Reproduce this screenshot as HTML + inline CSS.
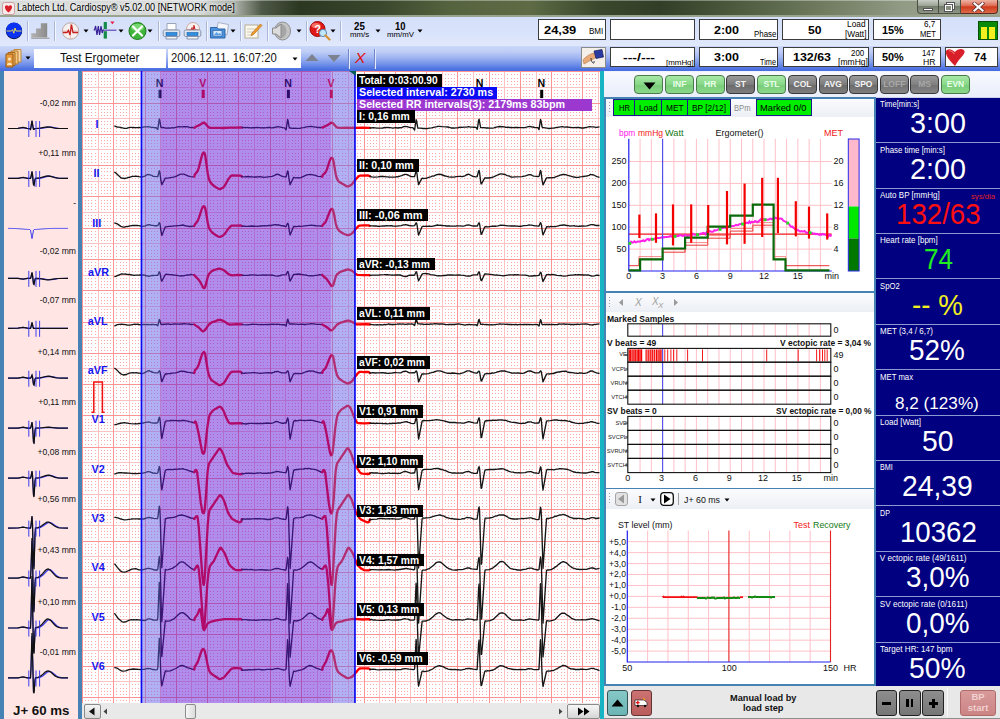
<!DOCTYPE html><html><head><meta charset="utf-8"><title>Cardiospy</title><style>
*{margin:0;padding:0;box-sizing:border-box}
html,body{width:1000px;height:719px;overflow:hidden;background:#fff}
body{font-family:"Liberation Sans",sans-serif;position:relative;font-size:11px;color:#000}
.a{position:absolute}
.t{position:absolute;white-space:nowrap;line-height:1}
.b{font-weight:bold}
.box{position:absolute;background:#fff;border:1px solid #3c3c3c;}
.lbl{position:absolute;white-space:nowrap;color:#fff;font-weight:bold;font-size:11px;line-height:12.5px;height:12.5px;padding-left:1px;letter-spacing:-0.2px}
.gb{position:absolute;top:75px;height:19px;width:29px;border-radius:4px;border:1px solid #3a3a3a;font-weight:bold;font-size:8.5px;text-align:center;line-height:17px;color:#f4f4f4}
.gbg{background:linear-gradient(#a8e8a8,#86d886 50%,#78cc78 51%,#8ad88a);color:#e8ffe8;border-color:#4a7a4a}
.gbk{background:linear-gradient(#9a9a9a,#7c7c7c 50%,#6a6a6a 51%,#7e7e7e);}
.gbd{background:linear-gradient(#9a9a9a,#808080 50%,#727272 51%,#848484);color:#a8a8a8}
.sb{position:absolute;top:99px;height:17px;background:#00ee00;border:1px solid #1a1a8a;font-size:10.5px;text-align:center;line-height:15px;color:#000}
.dp{position:absolute;left:876px;width:124px;background:#000080;color:#fff;border-top:1px solid #7a8fc8}
.dp .l{position:absolute;left:3px;top:3px;font-size:8.5px;white-space:nowrap;letter-spacing:-0.1px}
.dp .v{position:absolute;left:0;width:124px;text-align:center;top:12px;font-size:29px;line-height:32px;white-space:nowrap}
.ax{position:absolute;font-size:9.5px;white-space:nowrap;line-height:1;color:#111}
</style></head><body>
<div class="a" style="left:0;top:0;width:1000px;height:17px;background:linear-gradient(90deg,#d9dcdb 0,#d4d7d6 200px,#a0a69c 238px,#4e5846 262px,#2c3722 300px,#3a472c 380px,#56633f 450px,#5e6b45 530px,#3a472c 600px,#323e27 660px,#4f5c3f 740px,#6f7a5e 820px,#929b86 905px,#a0a894 1000px)"></div>
<div class="a" style="left:0;top:0;width:1000px;height:1px;background:rgba(255,255,255,.35)"></div>
<div class="a" style="left:0;top:15px;width:1000px;height:1.5px;background:#9aa38e"></div>
<svg class="a" style="left:2px;top:2px" width="13" height="13" viewBox="0 0 13 13"><rect x="0.5" y="0.5" width="12" height="12" rx="2" fill="#fbeaea" stroke="#c9a0a0"/><path d="M6.5 10.5 C2 7 2.2 3.2 4.6 3.2 C5.8 3.2 6.5 4.4 6.5 4.4 C6.5 4.4 7.2 3.2 8.4 3.2 C10.8 3.2 11 7 6.5 10.5Z" fill="#d8202a"/></svg>

<div class="t" style="left:17.30px;top:3.44px;font-size:10px;color:#000;transform-origin:0 0;transform:scaleX(0.9125);text-shadow:0 0 4px #fff,0 0 6px #fff;">Labtech Ltd. Cardiospy® v5.02.00 [NETWORK mode]</div>
<div class="a" style="left:917px;top:0;width:22px;height:14px;border:1px solid #4a5040;border-top:none;border-radius:0 0 0 4px;background:linear-gradient(#c9cdc6,#9aa294 45%,#747c6c 50%,#8d9586)"></div>
<div class="a" style="left:939px;top:0;width:22px;height:14px;border:1px solid #4a5040;border-top:none;border-left:none;background:linear-gradient(#c9cdc6,#9aa294 45%,#747c6c 50%,#8d9586)"></div>
<div class="a" style="left:961px;top:0;width:37px;height:14px;border:1px solid #5a2a24;border-top:none;border-left:none;border-radius:0 0 4px 0;background:linear-gradient(#eeb4a4,#de6a52 45%,#d03a1c 52%,#dc6a48)"></div>
<div class="a" style="left:923px;top:8px;width:10px;height:3px;background:#fff;border:1px solid #555"></div>
<div class="a" style="left:947px;top:3px;width:7px;height:6px;border:1.5px solid #fff;outline:1px solid #555"></div>
<div class="a" style="left:945px;top:5px;width:7px;height:6px;border:1.5px solid #fff;background:#888f80;outline:1px solid #555"></div>
<svg class="a" style="left:972px;top:2px" width="13" height="10" viewBox="0 0 13 10"><path d="M2.5 1.5L10.5 8.5M10.5 1.5L2.5 8.5" stroke="#5a3030" stroke-width="3.6" stroke-linecap="square"/><path d="M2.5 1.5L10.5 8.5M10.5 1.5L2.5 8.5" stroke="#fff" stroke-width="2.2" stroke-linecap="square"/></svg>

<div class="a" style="left:0;top:16.5px;width:1000px;height:28.5px;background:linear-gradient(#d4dff9,#d9e3fb 60%,#e0e8fc)"></div>
<div class="a" style="left:0;top:44.5px;width:1000px;height:26.8px;background:linear-gradient(#eef2fd 0,#c8d5f8 6%,#c0cef7 25%,#9db3f1 50%,#6f8fe9 75%,#4a70e1 94%,#466ce0 100%)"></div>

<div class="a" style="left:27.0px;top:21px;width:1px;height:20px;background:#a9b6d6"></div><div class="a" style="left:28.0px;top:21px;width:1px;height:20px;background:#f4f7ff"></div>
<div class="a" style="left:54.0px;top:21px;width:1px;height:20px;background:#a9b6d6"></div><div class="a" style="left:55.0px;top:21px;width:1px;height:20px;background:#f4f7ff"></div>
<div class="a" style="left:157.5px;top:21px;width:1px;height:20px;background:#a9b6d6"></div><div class="a" style="left:158.5px;top:21px;width:1px;height:20px;background:#f4f7ff"></div>
<div class="a" style="left:205.5px;top:21px;width:1px;height:20px;background:#a9b6d6"></div><div class="a" style="left:206.5px;top:21px;width:1px;height:20px;background:#f4f7ff"></div>
<div class="a" style="left:240.0px;top:21px;width:1px;height:20px;background:#a9b6d6"></div><div class="a" style="left:241.0px;top:21px;width:1px;height:20px;background:#f4f7ff"></div>
<div class="a" style="left:266.5px;top:21px;width:1px;height:20px;background:#a9b6d6"></div><div class="a" style="left:267.5px;top:21px;width:1px;height:20px;background:#f4f7ff"></div>
<div class="a" style="left:305.5px;top:21px;width:1px;height:20px;background:#a9b6d6"></div><div class="a" style="left:306.5px;top:21px;width:1px;height:20px;background:#f4f7ff"></div>
<div class="a" style="left:339.5px;top:21px;width:1px;height:20px;background:#a9b6d6"></div><div class="a" style="left:340.5px;top:21px;width:1px;height:20px;background:#f4f7ff"></div>
<svg class="a" style="left:83px;top:29px" width="6" height="4"><path d="M0.5 0.5H5.5L3 3.5Z" fill="#000"/></svg>
<svg class="a" style="left:118px;top:29px" width="6" height="4"><path d="M0.5 0.5H5.5L3 3.5Z" fill="#000"/></svg>
<svg class="a" style="left:147px;top:29px" width="6" height="4"><path d="M0.5 0.5H5.5L3 3.5Z" fill="#000"/></svg>
<svg class="a" style="left:229.5px;top:29px" width="6" height="4"><path d="M0.5 0.5H5.5L3 3.5Z" fill="#000"/></svg>
<svg class="a" style="left:296px;top:29px" width="6" height="4"><path d="M0.5 0.5H5.5L3 3.5Z" fill="#000"/></svg>
<svg class="a" style="left:329.5px;top:29px" width="6" height="4"><path d="M0.5 0.5H5.5L3 3.5Z" fill="#000"/></svg>
<svg class="a" style="left:375px;top:29px" width="6" height="4"><path d="M0.5 0.5H5.5L3 3.5Z" fill="#000"/></svg>
<svg class="a" style="left:417px;top:29px" width="6" height="4"><path d="M0.5 0.5H5.5L3 3.5Z" fill="#000"/></svg>
<svg class="a" style="left:5px;top:22px" width="18" height="18" viewBox="0 0 18 18"><circle cx="9" cy="9" r="8.2" fill="#0a0a30"/><circle cx="9" cy="8.4" r="8" fill="#0a32f0"/><path d="M1.5 9H6.5L7.6 7.6L8.8 11.2L10 6L11 9H16.5" fill="none" stroke="#ffe84a" stroke-width="0.9"/></svg>
<svg class="a" style="left:30px;top:22px" width="23" height="18" viewBox="0 0 23 18"><defs><linearGradient id="stg" x1="0" x2="1"><stop offset="0" stop-color="#b4b4b4"/><stop offset="1" stop-color="#8a8a8a"/></linearGradient></defs><path d="M1.2 15.6V11.3H6V6.5H10.8V1.2H17.2V15.6Z" fill="url(#stg)"/><path d="M1.2 15.6H19.5V17H1.2Z" fill="#a8a8a8"/></svg>
<svg class="a" style="left:61px;top:22px" width="19" height="18" viewBox="0 0 19 18"><circle cx="9.5" cy="9" r="8.2" fill="#f6f0ee" stroke="#b9a9a6" stroke-width="1"/><path d="M9.5 1V17M1.5 9H17.5" stroke="#e2b4b0" stroke-width="0.8"/><path d="M2 10.5H6L7.5 8.5L9 13L10.5 2.5L12 10.5H17" fill="none" stroke="#c81e1e" stroke-width="1.3"/></svg>
<svg class="a" style="left:93px;top:21px" width="25" height="19" viewBox="0 0 25 19"><path d="M0.6 9H1.6L2.6 5L4 14L5.3 5L6.6 14L8 5L9.2 12L10.4 8.5" fill="none" stroke="#3a2096" stroke-width="1.2"/><rect x="10.7" y="1" width="3.2" height="7" fill="#158a4a"/><rect x="10.7" y="10.2" width="3.2" height="7.4" fill="#158a4a"/><path d="M10 9.2H23.5" stroke="#5a3ab0" stroke-width="1.1"/><path d="M17.2 0.6H21.6L19.4 3.2Z" fill="#e81e4a"/></svg>
<svg class="a" style="left:128px;top:22px" width="19" height="18" viewBox="0 0 19 18"><circle cx="9.5" cy="9" r="8.5" fill="#3fb43a" stroke="#1c7a1c"/><ellipse cx="9.5" cy="5.5" rx="6.5" ry="3.8" fill="#8fe486" opacity=".7"/><path d="M5 4.5L14 13.5M14 4.5L5 13.5" stroke="#fff" stroke-width="2.2" stroke-linecap="round"/></svg>
<svg class="a" style="left:162px;top:22px" width="19" height="18" viewBox="0 0 19 18"><path d="M5 1.5H14V8H5Z" fill="#fdfdfd" stroke="#9aa6b8"/><rect x="1.2" y="8" width="16.6" height="6.5" rx="1.5" fill="#dfe6ee" stroke="#8795ab"/><rect x="4" y="10.5" width="11" height="3" fill="#2f8fe0" stroke="#1b5fb0" stroke-width=".6"/><path d="M4 14.5H15V17H4Z" fill="#f4f6fa" stroke="#8795ab"/></svg>
<svg class="a" style="left:183px;top:22px" width="19" height="18" viewBox="0 0 19 18"><circle cx="10" cy="7" r="6.5" fill="#f6f0ee" stroke="#c9a9a6"/><path d="M4.5 8H8L9 6L10 10L11 3L12 8H15.5" fill="none" stroke="#c81e1e" stroke-width="1.1"/><rect x="1.2" y="8" width="16.6" height="6.5" rx="1.5" fill="#dfe6ee" stroke="#8795ab"/><rect x="4" y="10.5" width="11" height="3" fill="#2f8fe0" stroke="#1b5fb0" stroke-width=".6"/><path d="M4 14.5H15V17H4Z" fill="#f4f6fa" stroke="#8795ab"/></svg>
<svg class="a" style="left:209px;top:21px" width="21" height="19" viewBox="0 0 21 19"><path d="M9 1.5L19.5 3.5L18 14L7.5 12Z" fill="#f4f6fb" stroke="#a8b2c6"/><path d="M1.5 6.5H8L9.5 8H16V17H1.5Z" fill="#4d92dc" stroke="#2b64aa"/><rect x="4" y="9.5" width="9" height="5.5" fill="#d6e8fb" stroke="#2b64aa" stroke-width=".7"/><path d="M5 14L7.5 11L9.5 13L11 12L12.5 14Z" fill="#5aa0e8"/></svg>
<svg class="a" style="left:243px;top:22px" width="20" height="18" viewBox="0 0 20 18"><rect x="2" y="3" width="13" height="13" fill="#fbf8ee" stroke="#b8ae96"/><path d="M4 7H13M4 10H13M4 13H10" stroke="#c9c2ae" stroke-width=".9"/><path d="M17.5 2L9 11L8 13.5L10.5 12.5L19 3.5Z" fill="#f0a030" stroke="#b86a10" stroke-width=".7"/></svg>
<svg class="a" style="left:271px;top:21px" width="21" height="20" viewBox="0 0 21 20"><ellipse cx="11.5" cy="10" rx="8" ry="9" fill="#c4c4c4" stroke="#8e8e8e"/><ellipse cx="10" cy="10" rx="5.5" ry="7" fill="#a6a6a6"/><path d="M1.5 7H5L10 3V17L5 13H1.5Z" fill="#dcdcdc" stroke="#8a8a8a"/></svg>
<svg class="a" style="left:309px;top:21px" width="22" height="20" viewBox="0 0 22 20"><circle cx="8.5" cy="8" r="7.5" fill="#e01818" stroke="#a00808"/><ellipse cx="7" cy="4.6" rx="4.5" ry="2.6" fill="#ff8a7a" opacity=".75"/><text x="8.5" y="12" font-family="Liberation Sans" font-weight="bold" font-size="11" fill="#fff" text-anchor="middle">?</text><circle cx="14" cy="12" r="3.6" fill="#bfe6fa" stroke="#5a8ab0" stroke-width="1"/><path d="M16.5 14.5L20.5 18.5" stroke="#d89030" stroke-width="2.2" stroke-linecap="round"/></svg>
<div class="t" style="left:353.70px;top:21.73px;font-size:10px;color:#000;font-weight:bold;transform-origin:0 0;transform:scaleX(0.9711);">25</div>
<div class="t" style="left:349.50px;top:31.43px;font-size:8px;color:#000;transform-origin:0 0;transform:scaleX(0.9821);">mm/s</div>
<div class="t" style="left:395.00px;top:21.73px;font-size:10px;color:#000;font-weight:bold;transform-origin:0 0;transform:scaleX(0.9441);">10</div>
<div class="t" style="left:386.70px;top:31.43px;font-size:8px;color:#000;transform-origin:0 0;transform:scaleX(0.9800);">mm/mV</div>
<div class="box" style="left:538px;top:19.3px;width:68px;height:20.499999999999996px"></div>
<div class="box" style="left:610px;top:19.3px;width:85px;height:20.499999999999996px"></div>
<div class="box" style="left:699px;top:19.3px;width:78.5px;height:20.499999999999996px"></div>
<div class="box" style="left:782px;top:19.3px;width:87px;height:20.499999999999996px"></div>
<div class="box" style="left:872.5px;top:19.3px;width:68.0px;height:20.499999999999996px"></div>
<div class="box" style="left:610px;top:47px;width:85px;height:20px"></div>
<div class="box" style="left:699px;top:47px;width:78.5px;height:20px"></div>
<div class="box" style="left:782.5px;top:47px;width:86.0px;height:20px"></div>
<div class="box" style="left:872.5px;top:47px;width:68.0px;height:20px"></div>
<div class="box" style="left:944.5px;top:47px;width:53.0px;height:20px"></div>
<div class="t" style="left:543.70px;top:25.19px;font-size:11px;color:#000;font-weight:bold;transform-origin:0 0;transform:scaleX(1.1735);">24,39</div>
<div class="t" style="left:588.70px;top:26.16px;font-size:9.5px;color:#000;transform-origin:0 0;transform:scaleX(0.8467);">BMI</div>
<div class="t" style="left:713.70px;top:25.19px;font-size:11px;color:#000;font-weight:bold;transform-origin:0 0;transform:scaleX(1.1357);">2:00</div>
<div class="t" style="left:753.50px;top:30.00px;font-size:8.5px;color:#000;transform-origin:0 0;transform:scaleX(0.9336);">Phase</div>
<div class="t" style="left:807.50px;top:25.19px;font-size:11px;color:#000;font-weight:bold;transform-origin:0 0;transform:scaleX(1.1035);">50</div>
<div class="t" style="left:847.00px;top:20.30px;font-size:8.5px;color:#000;transform-origin:0 0;transform:scaleX(0.9785);">Load</div>
<div class="t" style="left:844.50px;top:29.60px;font-size:8.5px;color:#000;transform-origin:0 0;transform:scaleX(0.9826);">[Watt]</div>
<div class="t" style="left:882.00px;top:25.19px;font-size:11px;color:#000;font-weight:bold;transform-origin:0 0;transform:scaleX(0.9857);">15%</div>
<div class="t" style="left:923.70px;top:20.30px;font-size:8.5px;color:#000;transform-origin:0 0;transform:scaleX(0.9564);">6,7</div>
<div class="t" style="left:919.50px;top:29.60px;font-size:8.5px;color:#000;transform-origin:0 0;transform:scaleX(0.8918);">MET</div>
<div class="t" style="left:622.50px;top:52.39px;font-size:11px;color:#000;font-weight:bold;transform-origin:0 0;transform:scaleX(1.2784);">---/---</div>
<div class="t" style="left:666.00px;top:58.65px;font-size:7.5px;color:#000;transform-origin:0 0;transform:scaleX(1.0553);">[mmHg]</div>
<div class="t" style="left:713.70px;top:52.39px;font-size:11px;color:#000;font-weight:bold;transform-origin:0 0;transform:scaleX(1.1357);">3:00</div>
<div class="t" style="left:760.00px;top:57.80px;font-size:8.5px;color:#000;transform-origin:0 0;transform:scaleX(0.8615);">Time</div>
<div class="t" style="left:793.00px;top:52.39px;font-size:11px;color:#000;font-weight:bold;transform-origin:0 0;transform:scaleX(1.1296);">132/63</div>
<div class="t" style="left:850.50px;top:47.66px;font-size:9.5px;color:#000;transform-origin:0 0;transform:scaleX(0.8329);">200</div>
<div class="t" style="left:837.50px;top:57.80px;font-size:8.5px;color:#000;transform-origin:0 0;transform:scaleX(1.0084);">[mmHg]</div>
<div class="t" style="left:882.00px;top:52.39px;font-size:11px;color:#000;font-weight:bold;transform-origin:0 0;transform:scaleX(0.9857);">50%</div>
<div class="t" style="left:922.00px;top:47.66px;font-size:9.5px;color:#000;transform-origin:0 0;transform:scaleX(0.8203);">147</div>
<div class="t" style="left:922.50px;top:57.80px;font-size:8.5px;color:#000;transform-origin:0 0;transform:scaleX(1.0181);">HR</div>
<div class="t" style="left:973.70px;top:52.39px;font-size:11px;color:#000;font-weight:bold;transform-origin:0 0;transform:scaleX(1.0054);">74</div>
<svg class="a" style="left:945px;top:48px" width="21" height="19" viewBox="0 0 21 19"><path d="M10 18C3 11 0.5 7 1 3.5C1.6 0.5 6 0 9.8 4C13 0.2 18.5 0.2 19.5 3C20.4 6.5 15 9 10 18Z" fill="#d81e28"/><path d="M4 3C6 2 8 4 9.5 6" stroke="#f0786e" stroke-width="1.2" fill="none"/></svg>
<div class="a" style="left:978px;top:21px;width:20px;height:19px;background:#0a8a0a;border:1px solid #055005"></div><div class="a" style="left:981px;top:27px;width:6px;height:12px;background:#f2ee20"></div><div class="a" style="left:989px;top:27px;width:6px;height:12px;background:#f2ee20"></div>
<div class="a" style="left:581px;top:47px;width:25px;height:20.5px;background:#f4efe8;border:1px solid #8a8a8a"></div>
<svg class="a" style="left:582px;top:48px" width="23" height="19" viewBox="0 0 23 19"><path d="M1 12C4 8 8 6 12 5L15 9C11 11 6 14 2 16Z" fill="#e8a878" stroke="#b87848" stroke-width=".6"/><path d="M12 3L20 1.5L21.5 9L14 10.5Z" fill="#2a3aa0" stroke="#141c60" stroke-width=".7"/><path d="M9 10C9 15 13 17 12 13" fill="none" stroke="#333" stroke-width="1"/></svg>
<svg class="a" style="left:5px;top:48px" width="18" height="20" viewBox="0 0 18 20"><path d="M9 1.5H16V14H9Z" fill="#f6d9a8" stroke="#c08a3a"/><path d="M6 3H13V16H6Z" fill="#f2c47c" stroke="#b87a2a"/><path d="M3 4.5H10V17.5H3Z" fill="#eeb060" stroke="#a86a1a"/><path d="M1 6H8V19H1Z" fill="#e89a3c" stroke="#9a5a10"/><circle cx="4.5" cy="11" r="1.6" fill="#fbe4c0"/><path d="M2 17C2 14 7 14 7 17Z" fill="#fbe4c0"/></svg>
<svg class="a" style="left:25px;top:56px" width="6" height="4"><path d="M0.5 0.5H5.5L3 3.5Z" fill="#000"/></svg>
<div class="a" style="left:34px;top:48.5px;width:132px;height:19px;background:#fff"></div>
<div class="t" style="left:60.00px;top:52.02px;font-size:12.5px;color:#111;transform-origin:0 0;transform:scaleX(0.9381);">Test Ergometer</div>
<div class="a" style="left:168px;top:48.5px;width:132.5px;height:19px;background:#fff"></div>
<div class="t" style="left:171.30px;top:52.02px;font-size:12.5px;color:#111;transform-origin:0 0;transform:scaleX(0.9017);">2006.12.11. 16:07:20</div>
<svg class="a" style="left:292px;top:57px" width="6" height="4"><path d="M0.5 0.5H5.5L3 3.5Z" fill="#000"/></svg>
<svg class="a" style="left:305px;top:53px" width="14" height="9"><path d="M0.5 8L7 1L13.5 8Z" fill="#7c8290"/></svg>
<svg class="a" style="left:327px;top:54px" width="14" height="9"><path d="M0.5 1L7 8L13.5 1Z" fill="#7c8290"/></svg>
<div class="a" style="left:348.2px;top:49px;width:1px;height:20px;background:#6f86c8"></div><div class="a" style="left:349.2px;top:49px;width:1px;height:20px;background:#e4ebff"></div>
<div class="a" style="left:374.0px;top:49px;width:1px;height:20px;background:#6f86c8"></div><div class="a" style="left:375.0px;top:49px;width:1px;height:20px;background:#e4ebff"></div>
<div class="t" style="left:355.00px;top:51.35px;font-size:14px;color:#e01010;font-style:italic;transform-origin:0 0;transform:scaleX(1.1244);">X</div>
<div class="a" style="left:0;top:71px;width:83px;height:648px;background:#4682b4"></div>
<div class="a" style="left:4px;top:71px;width:74.3px;height:648px;background:#ffe6e5"></div>
<div class="t" style="left:39.68px;top:98.82px;font-size:8.6px;color:#111;">-0,02 mm</div>
<div class="t" style="left:38.16px;top:148.82px;font-size:8.6px;color:#111;">+0,11 mm</div>
<div class="t" style="left:73.14px;top:198.82px;font-size:8.6px;color:#111;">-</div>
<div class="t" style="left:39.68px;top:246.82px;font-size:8.6px;color:#111;">-0,02 mm</div>
<div class="t" style="left:39.68px;top:295.82px;font-size:8.6px;color:#111;">-0,07 mm</div>
<div class="t" style="left:37.52px;top:347.82px;font-size:8.6px;color:#111;">+0,14 mm</div>
<div class="t" style="left:38.16px;top:397.82px;font-size:8.6px;color:#111;">+0,11 mm</div>
<div class="t" style="left:37.52px;top:447.82px;font-size:8.6px;color:#111;">+0,08 mm</div>
<div class="t" style="left:37.52px;top:494.82px;font-size:8.6px;color:#111;">+0,56 mm</div>
<div class="t" style="left:37.52px;top:545.82px;font-size:8.6px;color:#111;">+0,43 mm</div>
<div class="t" style="left:37.52px;top:597.82px;font-size:8.6px;color:#111;">+0,10 mm</div>
<div class="t" style="left:39.68px;top:647.82px;font-size:8.6px;color:#111;">-0,01 mm</div>
<div class="t" style="left:12.50px;top:704.00px;font-size:13px;color:#111;font-weight:bold;transform-origin:0 0;transform:scaleX(1.0218);">J+ 60 ms</div>
<svg class="a" style="left:0;top:72px" width="82" height="631" viewBox="0 72 82 631"><polyline points="8.0,128.5 18.0,128.4 23.0,127.6 27.0,128.3 29.5,128.6 30.5,129.4 32.0,121.1 33.0,127.2 33.5,129.2 34.0,129.3 35.0,128.6 35.5,128.5 41.0,128.3 49.0,127.1 51.5,127.2 56.5,128.1 59.0,128.3 68.0,128.5" fill="none" stroke="#3a3af0" stroke-width="1.2"/><polyline points="8.0,128.5 18.0,128.4 23.0,127.5 24.0,127.6 27.0,128.3 29.5,128.6 30.5,129.4 31.0,127.1 32.0,120.5 33.0,127.1 33.5,129.3 34.0,129.3 35.0,128.6 35.5,128.5 40.0,128.2 45.5,127.2 47.5,127.0 50.0,127.1 55.0,128.1 57.5,128.3 68.0,128.5" fill="none" stroke="#101010" stroke-width="1.25"/><path d="M28.8 121.0V137.0" stroke="#2a2af0" stroke-width="0.9"/><path d="M36 121.0V137.0" stroke="#2a2af0" stroke-width="0.9"/><path d="M39.6 121.0V137.0" stroke="#2a2af0" stroke-width="0.9"/><polyline points="8.0,178.4 18.0,178.4 23.0,177.5 27.5,178.3 30.5,178.4 31.0,176.9 32.0,171.9 32.5,175.0 33.5,184.3 34.0,184.8 35.0,179.5 35.5,178.4 38.5,178.3 41.0,178.1 47.5,176.3 49.5,176.1 51.5,176.3 56.5,177.8 59.0,178.2 62.0,178.4 68.0,178.4" fill="none" stroke="#3a3af0" stroke-width="1.2"/><polyline points="8.0,178.4 18.0,178.4 23.0,177.4 27.5,178.3 30.5,178.4 31.0,176.8 32.0,171.4 32.5,174.7 33.5,184.7 34.0,185.3 35.0,179.6 35.5,178.4 40.0,177.9 46.0,176.2 48.0,175.9 49.5,176.1 55.0,177.7 58.0,178.2 61.5,178.4 68.0,178.4" fill="none" stroke="#101010" stroke-width="1.25"/><path d="M28.8 170.95V186.95" stroke="#2a2af0" stroke-width="0.9"/><path d="M36 170.95V186.95" stroke="#2a2af0" stroke-width="0.9"/><path d="M39.6 170.95V186.95" stroke="#2a2af0" stroke-width="0.9"/><polyline points="8.0,228.4 8.5,228.4 9.0,228.4 9.5,228.4 10.0,228.4 10.5,228.4 11.0,228.4 11.5,228.4 12.0,228.5 12.5,228.5 13.0,228.5 13.5,228.5 14.0,228.5 14.5,228.5 15.0,228.5 15.5,228.5 16.0,228.6 16.5,228.6 17.0,228.6 17.5,228.6 18.0,228.7 18.5,228.7 19.0,228.7 19.5,228.8 20.0,228.8 20.5,228.8 21.0,228.9 21.5,228.9 22.0,228.9 22.5,229.0 23.0,229.0 23.5,229.1 24.0,229.1 24.5,229.2 25.0,229.2 25.5,229.3 26.0,229.3 26.5,229.3 27.0,229.4 27.5,229.4 28.0,229.5 28.5,229.5 29.0,229.5 29.5,229.5 30.0,229.6 30.5,230.1 31.0,233.0 31.5,235.8 32.0,238.6 32.5,235.8 33.0,233.0 33.5,230.1 34.0,229.6 34.5,229.5 35.0,229.5 35.5,229.5 36.0,229.5 36.5,229.4 37.0,229.4 37.5,229.3 38.0,229.3 38.5,229.3 39.0,229.2 39.5,229.2 40.0,229.1 40.5,229.1 41.0,229.0 41.5,229.0 42.0,228.9 42.5,228.9 43.0,228.9 43.5,228.8 44.0,228.8 44.5,228.8 45.0,228.7 45.5,228.7 46.0,228.7 46.5,228.6 47.0,228.6 47.5,228.6 48.0,228.6 48.5,228.5 49.0,228.5 49.5,228.5 50.0,228.5 50.5,228.5 51.0,228.5 51.5,228.5 52.0,228.5 52.5,228.4 53.0,228.4 53.5,228.4 54.0,228.4 54.5,228.4 55.0,228.4 55.5,228.4 56.0,228.4 56.5,228.4 57.0,228.4 57.5,228.4 58.0,228.4 58.5,228.4 59.0,228.4 59.5,228.4 60.0,228.4 60.5,228.4 61.0,228.4 61.5,228.4 62.0,228.4 62.5,228.4 63.0,228.4 63.5,228.4 64.0,228.4 64.5,228.4 65.0,228.4 65.5,228.4 66.0,228.4 66.5,228.4 67.0,228.4 67.5,228.4 68.0,228.4" fill="none" stroke="#3a3af0" stroke-width="1"/><polyline points="8.0,278.4 18.0,278.4 23.0,279.2 27.5,278.4 30.5,278.4 31.0,277.1 32.0,272.8 32.5,275.4 33.5,283.5 34.0,283.9 35.0,279.3 35.5,278.4 41.0,278.6 47.5,279.6 49.5,279.7 51.5,279.6 56.5,278.8 59.0,278.5 68.0,278.4" fill="none" stroke="#3a3af0" stroke-width="1.2"/><polyline points="8.0,278.4 18.0,278.4 23.0,279.2 27.5,278.4 30.5,278.4 31.0,277.0 32.0,272.4 32.5,275.2 33.5,283.9 34.0,284.4 35.0,279.4 35.5,278.4 40.0,278.7 45.5,279.6 48.0,279.9 50.0,279.7 55.0,278.8 57.5,278.5 68.0,278.4" fill="none" stroke="#101010" stroke-width="1.25"/><path d="M28.8 270.85V286.85" stroke="#2a2af0" stroke-width="0.9"/><path d="M36 270.85V286.85" stroke="#2a2af0" stroke-width="0.9"/><path d="M39.6 270.85V286.85" stroke="#2a2af0" stroke-width="0.9"/><polyline points="8.0,328.3 18.0,328.2 23.0,327.4 27.5,328.2 30.5,328.3 31.0,327.0 32.0,322.7 33.0,327.0 33.5,328.3 68.0,328.3" fill="none" stroke="#3a3af0" stroke-width="1.2"/><polyline points="8.0,328.3 18.0,328.2 23.0,327.3 27.5,328.2 30.5,328.3 31.0,326.9 32.0,322.3 33.0,326.9 33.5,328.3 68.0,328.3" fill="none" stroke="#101010" stroke-width="1.25"/><path d="M28.8 320.8V336.8" stroke="#2a2af0" stroke-width="0.9"/><path d="M36 320.8V336.8" stroke="#2a2af0" stroke-width="0.9"/><path d="M39.6 320.8V336.8" stroke="#2a2af0" stroke-width="0.9"/><polyline points="8.0,378.2 18.0,378.2 23.0,377.3 27.5,378.1 30.5,378.2 31.0,377.6 32.0,375.5 32.5,377.1 33.5,384.1 34.0,384.6 35.0,379.3 35.5,378.2 41.0,377.9 47.5,376.6 49.5,376.4 51.5,376.6 56.5,377.7 59.0,378.0 68.0,378.2" fill="none" stroke="#3a3af0" stroke-width="1.2"/><polyline points="8.0,378.2 18.0,378.2 23.0,377.2 27.5,378.1 30.5,378.2 31.0,377.6 32.0,375.2 32.5,377.0 33.5,384.5 34.0,385.1 35.0,379.4 35.5,378.2 40.0,377.8 45.5,376.5 48.0,376.2 50.0,376.4 55.0,377.7 57.5,378.0 61.0,378.2 68.0,378.2" fill="none" stroke="#101010" stroke-width="1.25"/><path d="M28.8 370.75V386.75" stroke="#2a2af0" stroke-width="0.9"/><path d="M36 370.75V386.75" stroke="#2a2af0" stroke-width="0.9"/><path d="M39.6 370.75V386.75" stroke="#2a2af0" stroke-width="0.9"/><polyline points="8.0,428.2 18.0,428.1 23.0,427.3 27.5,428.1 30.5,428.2 31.0,426.9 32.0,422.6 32.5,426.0 33.5,441.4 34.0,442.5 35.0,430.6 35.5,428.2 41.0,428.0 49.5,427.3 59.0,428.1 68.0,428.2" fill="none" stroke="#3a3af0" stroke-width="1.2"/><polyline points="8.0,428.2 18.0,428.1 23.0,427.2 27.5,428.1 30.5,428.2 31.0,426.8 32.0,422.2 32.5,425.8 33.5,442.3 34.0,443.6 35.0,430.8 35.5,428.2 40.0,428.0 45.5,427.3 48.0,427.2 57.5,428.1 68.0,428.2" fill="none" stroke="#101010" stroke-width="1.25"/><path d="M28.8 420.70000000000005V436.70000000000005" stroke="#2a2af0" stroke-width="0.9"/><path d="M36 420.70000000000005V436.70000000000005" stroke="#2a2af0" stroke-width="0.9"/><path d="M39.6 420.70000000000005V436.70000000000005" stroke="#2a2af0" stroke-width="0.9"/><polyline points="8.0,478.1 18.0,478.1 23.0,477.2 27.5,478.0 30.5,478.1 31.0,476.6 32.0,471.6 32.5,475.6 33.5,494.2 34.0,495.7 35.0,481.1 35.5,478.1 38.5,478.0 41.0,477.7 43.0,477.2 47.5,475.6 49.5,475.4 51.5,475.6 56.5,477.3 59.0,477.8 62.0,478.1 68.0,478.1" fill="none" stroke="#3a3af0" stroke-width="1.2"/><polyline points="8.0,478.1 18.0,478.1 23.0,477.1 27.5,478.0 30.5,478.1 31.0,476.5 32.0,471.1 32.5,475.4 33.5,495.4 34.0,497.0 35.0,481.2 35.5,478.1 38.0,477.9 40.0,477.5 45.5,475.6 48.0,475.2 50.0,475.4 55.0,477.3 57.5,477.8 61.0,478.1 68.0,478.1" fill="none" stroke="#101010" stroke-width="1.25"/><path d="M28.8 470.65000000000003V486.65000000000003" stroke="#2a2af0" stroke-width="0.9"/><path d="M36 470.65000000000003V486.65000000000003" stroke="#2a2af0" stroke-width="0.9"/><path d="M39.6 470.65000000000003V486.65000000000003" stroke="#2a2af0" stroke-width="0.9"/><polyline points="8.0,528.1 18.0,528.0 23.0,527.2 27.5,528.0 30.5,528.1 31.0,525.5 32.0,516.9 32.5,524.4 33.5,563.2 34.0,566.3 35.0,534.4 35.5,528.1 38.5,527.8 41.0,527.2 43.0,526.1 47.5,523.0 48.5,522.7 49.5,522.5 50.5,522.7 51.5,523.0 56.5,526.4 59.0,527.5 62.0,528.0 68.0,528.1" fill="none" stroke="#3a3af0" stroke-width="1.2"/><polyline points="8.0,528.1 18.0,528.0 23.0,527.1 27.5,528.0 30.5,528.1 31.0,525.3 32.0,516.1 32.5,524.1 33.5,565.8 34.0,569.2 35.0,534.9 35.5,528.0 38.0,527.6 40.0,526.9 42.0,525.6 45.5,523.0 47.0,522.2 48.0,522.1 49.0,522.2 50.0,522.7 55.0,526.3 57.5,527.5 59.0,527.8 61.0,528.0 68.0,528.1" fill="none" stroke="#101010" stroke-width="1.25"/><path d="M28.8 520.6V536.6" stroke="#2a2af0" stroke-width="0.9"/><path d="M36 520.6V536.6" stroke="#2a2af0" stroke-width="0.9"/><path d="M39.6 520.6V536.6" stroke="#2a2af0" stroke-width="0.9"/><polyline points="8.0,578.0 18.0,578.0 23.0,577.1 27.5,577.9 30.5,578.0 31.0,569.5 32.0,540.8 32.5,557.8 33.5,607.3 34.0,609.9 35.0,583.3 35.5,578.0 38.5,577.6 40.0,577.1 41.0,576.6 43.0,575.1 46.5,571.3 47.5,570.5 48.5,569.9 49.5,569.7 50.5,569.9 51.5,570.5 56.5,575.6 57.5,576.3 59.0,577.1 60.5,577.6 62.0,577.9 68.0,578.0" fill="none" stroke="#3a3af0" stroke-width="1.2"/><polyline points="8.0,578.0 18.0,578.0 23.0,577.0 27.5,577.9 30.5,578.0 31.0,568.8 32.0,538.0 32.5,556.3 33.5,609.4 34.0,612.3 35.0,583.6 35.5,577.9 38.0,577.3 40.0,576.2 42.0,574.3 45.5,570.3 47.0,569.3 48.0,569.0 49.0,569.3 50.0,569.9 55.0,575.4 56.0,576.2 57.5,577.1 59.0,577.6 61.0,577.9 68.0,578.0" fill="none" stroke="#101010" stroke-width="1.25"/><path d="M28.8 570.55V586.55" stroke="#2a2af0" stroke-width="0.9"/><path d="M36 570.55V586.55" stroke="#2a2af0" stroke-width="0.9"/><path d="M39.6 570.55V586.55" stroke="#2a2af0" stroke-width="0.9"/><polyline points="8.0,628.0 18.0,627.9 23.0,627.1 27.5,627.9 30.5,628.0 31.0,616.8 32.0,579.6 33.5,649.9 34.0,651.9 35.0,631.9 35.5,627.9 38.5,627.6 40.0,627.1 41.0,626.6 43.0,625.1 46.5,621.3 47.5,620.4 48.5,619.8 49.5,619.6 50.5,619.8 51.5,620.4 56.5,625.5 57.5,626.3 59.0,627.1 60.5,627.6 62.0,627.8 68.0,628.0" fill="none" stroke="#3a3af0" stroke-width="1.2"/><polyline points="8.0,628.0 18.0,627.9 23.0,627.0 27.5,627.9 30.5,628.0 31.0,616.0 32.0,576.0 33.5,651.5 34.0,653.6 35.0,632.1 35.5,627.8 38.0,627.2 40.0,626.1 41.5,624.8 45.0,620.8 46.0,619.8 47.0,619.2 48.0,619.0 48.5,619.1 49.5,619.5 51.0,620.8 55.0,625.3 56.5,626.5 58.0,627.2 59.5,627.7 61.5,627.9 68.0,628.0" fill="none" stroke="#101010" stroke-width="1.25"/><path d="M28.8 620.5V636.5" stroke="#2a2af0" stroke-width="0.9"/><path d="M36 620.5V636.5" stroke="#2a2af0" stroke-width="0.9"/><path d="M39.6 620.5V636.5" stroke="#2a2af0" stroke-width="0.9"/><polyline points="8.0,677.9 18.0,677.9 23.0,677.0 27.5,677.8 30.5,677.9 31.0,668.3 32.0,636.1 33.5,691.1 34.0,692.3 35.0,680.3 35.5,677.9 38.5,677.6 41.0,676.9 43.0,675.7 46.5,672.7 48.0,671.8 49.5,671.4 51.0,671.8 52.5,672.7 56.5,676.0 59.0,677.2 62.0,677.8 68.0,677.9" fill="none" stroke="#3a3af0" stroke-width="1.2"/><polyline points="8.0,677.9 18.0,677.9 23.0,676.9 27.5,677.8 30.5,677.9 31.0,667.6 32.0,632.9 33.5,692.1 34.0,693.3 35.0,680.4 35.5,677.8 38.0,677.4 40.0,676.5 42.0,675.1 45.0,672.3 46.5,671.3 48.0,671.0 49.5,671.3 51.0,672.3 55.0,675.9 56.5,676.8 58.0,677.4 59.5,677.7 61.5,677.9 68.0,677.9" fill="none" stroke="#101010" stroke-width="1.25"/><path d="M28.8 670.45V686.45" stroke="#2a2af0" stroke-width="0.9"/><path d="M36 670.45V686.45" stroke="#2a2af0" stroke-width="0.9"/><path d="M39.6 670.45V686.45" stroke="#2a2af0" stroke-width="0.9"/></svg>
<svg class="a" style="left:82px;top:71px" width="518" height="632" viewBox="0 0 518 632">
<defs>
<g id="dr" fill="#ffa6a6" shape-rendering="crispEdges"><rect x="3" y="0" width="1" height="1"/><rect x="6" y="0" width="1" height="1"/><rect x="9" y="0" width="1" height="1"/><rect x="13" y="0" width="1" height="1"/><rect x="19" y="0" width="1" height="1"/><rect x="22" y="0" width="1" height="1"/><rect x="25" y="0" width="1" height="1"/><rect x="28" y="0" width="1" height="1"/><rect x="34" y="0" width="1" height="1"/><rect x="38" y="0" width="1" height="1"/><rect x="41" y="0" width="1" height="1"/><rect x="44" y="0" width="1" height="1"/><rect x="50" y="0" width="1" height="1"/><rect x="53" y="0" width="1" height="1"/><rect x="56" y="0" width="1" height="1"/><rect x="59" y="0" width="1" height="1"/><rect x="66" y="0" width="1" height="1"/><rect x="69" y="0" width="1" height="1"/><rect x="72" y="0" width="1" height="1"/><rect x="75" y="0" width="1" height="1"/><rect x="81" y="0" width="1" height="1"/><rect x="84" y="0" width="1" height="1"/><rect x="88" y="0" width="1" height="1"/><rect x="91" y="0" width="1" height="1"/><rect x="97" y="0" width="1" height="1"/><rect x="100" y="0" width="1" height="1"/><rect x="103" y="0" width="1" height="1"/><rect x="106" y="0" width="1" height="1"/><rect x="113" y="0" width="1" height="1"/><rect x="116" y="0" width="1" height="1"/><rect x="119" y="0" width="1" height="1"/><rect x="122" y="0" width="1" height="1"/><rect x="128" y="0" width="1" height="1"/><rect x="131" y="0" width="1" height="1"/><rect x="135" y="0" width="1" height="1"/><rect x="138" y="0" width="1" height="1"/><rect x="144" y="0" width="1" height="1"/><rect x="147" y="0" width="1" height="1"/><rect x="150" y="0" width="1" height="1"/><rect x="153" y="0" width="1" height="1"/><rect x="160" y="0" width="1" height="1"/><rect x="163" y="0" width="1" height="1"/><rect x="166" y="0" width="1" height="1"/><rect x="169" y="0" width="1" height="1"/><rect x="175" y="0" width="1" height="1"/><rect x="178" y="0" width="1" height="1"/><rect x="181" y="0" width="1" height="1"/><rect x="185" y="0" width="1" height="1"/><rect x="191" y="0" width="1" height="1"/><rect x="194" y="0" width="1" height="1"/><rect x="197" y="0" width="1" height="1"/><rect x="200" y="0" width="1" height="1"/><rect x="206" y="0" width="1" height="1"/><rect x="210" y="0" width="1" height="1"/><rect x="213" y="0" width="1" height="1"/><rect x="216" y="0" width="1" height="1"/><rect x="222" y="0" width="1" height="1"/><rect x="225" y="0" width="1" height="1"/><rect x="228" y="0" width="1" height="1"/><rect x="231" y="0" width="1" height="1"/><rect x="238" y="0" width="1" height="1"/><rect x="241" y="0" width="1" height="1"/><rect x="244" y="0" width="1" height="1"/><rect x="247" y="0" width="1" height="1"/><rect x="253" y="0" width="1" height="1"/><rect x="256" y="0" width="1" height="1"/><rect x="260" y="0" width="1" height="1"/><rect x="263" y="0" width="1" height="1"/><rect x="269" y="0" width="1" height="1"/><rect x="272" y="0" width="1" height="1"/><rect x="275" y="0" width="1" height="1"/><rect x="278" y="0" width="1" height="1"/><rect x="285" y="0" width="1" height="1"/><rect x="288" y="0" width="1" height="1"/><rect x="291" y="0" width="1" height="1"/><rect x="294" y="0" width="1" height="1"/><rect x="300" y="0" width="1" height="1"/><rect x="303" y="0" width="1" height="1"/><rect x="307" y="0" width="1" height="1"/><rect x="310" y="0" width="1" height="1"/><rect x="316" y="0" width="1" height="1"/><rect x="319" y="0" width="1" height="1"/><rect x="322" y="0" width="1" height="1"/><rect x="325" y="0" width="1" height="1"/><rect x="332" y="0" width="1" height="1"/><rect x="335" y="0" width="1" height="1"/><rect x="338" y="0" width="1" height="1"/><rect x="341" y="0" width="1" height="1"/><rect x="347" y="0" width="1" height="1"/><rect x="350" y="0" width="1" height="1"/><rect x="353" y="0" width="1" height="1"/><rect x="357" y="0" width="1" height="1"/><rect x="363" y="0" width="1" height="1"/><rect x="366" y="0" width="1" height="1"/><rect x="369" y="0" width="1" height="1"/><rect x="372" y="0" width="1" height="1"/><rect x="378" y="0" width="1" height="1"/><rect x="382" y="0" width="1" height="1"/><rect x="385" y="0" width="1" height="1"/><rect x="388" y="0" width="1" height="1"/><rect x="394" y="0" width="1" height="1"/><rect x="397" y="0" width="1" height="1"/><rect x="400" y="0" width="1" height="1"/><rect x="404" y="0" width="1" height="1"/><rect x="410" y="0" width="1" height="1"/><rect x="413" y="0" width="1" height="1"/><rect x="416" y="0" width="1" height="1"/><rect x="419" y="0" width="1" height="1"/><rect x="425" y="0" width="1" height="1"/><rect x="429" y="0" width="1" height="1"/><rect x="432" y="0" width="1" height="1"/><rect x="435" y="0" width="1" height="1"/><rect x="441" y="0" width="1" height="1"/><rect x="444" y="0" width="1" height="1"/><rect x="447" y="0" width="1" height="1"/><rect x="450" y="0" width="1" height="1"/><rect x="457" y="0" width="1" height="1"/><rect x="460" y="0" width="1" height="1"/><rect x="463" y="0" width="1" height="1"/><rect x="466" y="0" width="1" height="1"/><rect x="472" y="0" width="1" height="1"/><rect x="475" y="0" width="1" height="1"/><rect x="479" y="0" width="1" height="1"/><rect x="482" y="0" width="1" height="1"/><rect x="488" y="0" width="1" height="1"/><rect x="491" y="0" width="1" height="1"/><rect x="494" y="0" width="1" height="1"/><rect x="497" y="0" width="1" height="1"/><rect x="504" y="0" width="1" height="1"/><rect x="507" y="0" width="1" height="1"/><rect x="510" y="0" width="1" height="1"/><rect x="513" y="0" width="1" height="1"/></g>
</defs>
<rect width="518" height="632" fill="#fff"/>
<use href="#dr" y="3"/><use href="#dr" y="7"/><use href="#dr" y="10"/><use href="#dr" y="13"/><use href="#dr" y="19"/><use href="#dr" y="22"/><use href="#dr" y="25"/><use href="#dr" y="28"/><use href="#dr" y="35"/><use href="#dr" y="38"/><use href="#dr" y="41"/><use href="#dr" y="44"/><use href="#dr" y="50"/><use href="#dr" y="53"/><use href="#dr" y="57"/><use href="#dr" y="60"/><use href="#dr" y="66"/><use href="#dr" y="69"/><use href="#dr" y="72"/><use href="#dr" y="75"/><use href="#dr" y="82"/><use href="#dr" y="85"/><use href="#dr" y="88"/><use href="#dr" y="91"/><use href="#dr" y="97"/><use href="#dr" y="100"/><use href="#dr" y="104"/><use href="#dr" y="107"/><use href="#dr" y="113"/><use href="#dr" y="116"/><use href="#dr" y="119"/><use href="#dr" y="122"/><use href="#dr" y="129"/><use href="#dr" y="132"/><use href="#dr" y="135"/><use href="#dr" y="138"/><use href="#dr" y="144"/><use href="#dr" y="147"/><use href="#dr" y="150"/><use href="#dr" y="154"/><use href="#dr" y="160"/><use href="#dr" y="163"/><use href="#dr" y="166"/><use href="#dr" y="169"/><use href="#dr" y="175"/><use href="#dr" y="179"/><use href="#dr" y="182"/><use href="#dr" y="185"/><use href="#dr" y="191"/><use href="#dr" y="194"/><use href="#dr" y="197"/><use href="#dr" y="200"/><use href="#dr" y="207"/><use href="#dr" y="210"/><use href="#dr" y="213"/><use href="#dr" y="216"/><use href="#dr" y="222"/><use href="#dr" y="226"/><use href="#dr" y="229"/><use href="#dr" y="232"/><use href="#dr" y="238"/><use href="#dr" y="241"/><use href="#dr" y="244"/><use href="#dr" y="247"/><use href="#dr" y="254"/><use href="#dr" y="257"/><use href="#dr" y="260"/><use href="#dr" y="263"/><use href="#dr" y="269"/><use href="#dr" y="272"/><use href="#dr" y="276"/><use href="#dr" y="279"/><use href="#dr" y="285"/><use href="#dr" y="288"/><use href="#dr" y="291"/><use href="#dr" y="294"/><use href="#dr" y="301"/><use href="#dr" y="304"/><use href="#dr" y="307"/><use href="#dr" y="310"/><use href="#dr" y="316"/><use href="#dr" y="319"/><use href="#dr" y="322"/><use href="#dr" y="326"/><use href="#dr" y="332"/><use href="#dr" y="335"/><use href="#dr" y="338"/><use href="#dr" y="341"/><use href="#dr" y="348"/><use href="#dr" y="351"/><use href="#dr" y="354"/><use href="#dr" y="357"/><use href="#dr" y="363"/><use href="#dr" y="366"/><use href="#dr" y="369"/><use href="#dr" y="373"/><use href="#dr" y="379"/><use href="#dr" y="382"/><use href="#dr" y="385"/><use href="#dr" y="388"/><use href="#dr" y="394"/><use href="#dr" y="398"/><use href="#dr" y="401"/><use href="#dr" y="404"/><use href="#dr" y="410"/><use href="#dr" y="413"/><use href="#dr" y="416"/><use href="#dr" y="419"/><use href="#dr" y="426"/><use href="#dr" y="429"/><use href="#dr" y="432"/><use href="#dr" y="435"/><use href="#dr" y="441"/><use href="#dr" y="444"/><use href="#dr" y="448"/><use href="#dr" y="451"/><use href="#dr" y="457"/><use href="#dr" y="460"/><use href="#dr" y="463"/><use href="#dr" y="466"/><use href="#dr" y="473"/><use href="#dr" y="476"/><use href="#dr" y="479"/><use href="#dr" y="482"/><use href="#dr" y="488"/><use href="#dr" y="491"/><use href="#dr" y="495"/><use href="#dr" y="498"/><use href="#dr" y="504"/><use href="#dr" y="507"/><use href="#dr" y="510"/><use href="#dr" y="513"/><use href="#dr" y="520"/><use href="#dr" y="523"/><use href="#dr" y="526"/><use href="#dr" y="529"/><use href="#dr" y="535"/><use href="#dr" y="538"/><use href="#dr" y="541"/><use href="#dr" y="545"/><use href="#dr" y="551"/><use href="#dr" y="554"/><use href="#dr" y="557"/><use href="#dr" y="560"/><use href="#dr" y="566"/><use href="#dr" y="570"/><use href="#dr" y="573"/><use href="#dr" y="576"/><use href="#dr" y="582"/><use href="#dr" y="585"/><use href="#dr" y="588"/><use href="#dr" y="591"/><use href="#dr" y="598"/><use href="#dr" y="601"/><use href="#dr" y="604"/><use href="#dr" y="607"/><use href="#dr" y="613"/><use href="#dr" y="617"/><use href="#dr" y="620"/><use href="#dr" y="623"/><use href="#dr" y="629"/><use href="#dr" y="632"/>
<path d="M16.5 0V632M47.5 0V632M78.5 0V632M109.5 0V632M141.5 0V632M172.5 0V632M203.5 0V632M235.5 0V632M266.5 0V632M297.5 0V632M328.5 0V632M360.5 0V632M391.5 0V632M422.5 0V632M454.5 0V632M485.5 0V632M516.5 0V632M0 16.5H518M0 47.5H518M0 78.5H518M0 110.5H518M0 141.5H518M0 172.5H518M0 204.5H518M0 235.5H518M0 266.5H518M0 297.5H518M0 329.5H518M0 360.5H518M0 391.5H518M0 423.5H518M0 454.5H518M0 485.5H518M0 516.5H518M0 548.5H518M0 579.5H518M0 610.5H518" stroke="#ffc2c2" stroke-width="1" fill="none" shape-rendering="crispEdges"/>
<path d="M0.5 0V632M31.5 0V632M63.5 0V632M94.5 0V632M125.5 0V632M156.5 0V632M188.5 0V632M219.5 0V632M250.5 0V632M282.5 0V632M313.5 0V632M344.5 0V632M375.5 0V632M407.5 0V632M438.5 0V632M469.5 0V632M500.5 0V632M0 0.5H518M0 32.5H518M0 63.5H518M0 94.5H518M0 125.5H518M0 157.5H518M0 188.5H518M0 219.5H518M0 251.5H518M0 282.5H518M0 313.5H518M0 344.5H518M0 376.5H518M0 407.5H518M0 438.5H518M0 470.5H518M0 501.5H518M0 532.5H518M0 563.5H518M0 595.5H518M0 626.5H518" stroke="#ff9292" stroke-width="1" fill="none" shape-rendering="crispEdges"/>
<polyline points="32.3,54.9 35.3,56.2 36.3,56.1 38.8,56.4 39.8,56.9 40.8,56.9 42.3,57.3 44.8,57.3 45.8,56.9 48.8,56.3 49.8,56.4 50.3,56.6 51.3,56.4 53.3,56.6 54.8,56.6 55.8,56.7 56.8,56.5 58.8,56.7 62.3,55.9 65.3,55.8 65.8,55.6 69.8,56.4 70.8,56.3 71.8,56.7 73.3,56.6 73.8,56.8 74.3,56.6 75.3,58.2 75.8,58.4 77.3,47.9 77.8,49.7 78.8,56.0 79.3,56.6 79.8,56.5 80.8,56.7 81.3,56.5 81.8,56.6 83.8,57.1 86.8,56.9 87.8,57.1 90.8,56.6 91.3,56.8 91.8,56.8 96.8,55.7 99.8,55.9 101.3,55.7 104.3,55.7 106.3,55.9 106.8,56.2 108.3,56.6 110.3,56.4 112.3,56.7" fill="none" stroke="#161616" stroke-width="1.35" stroke-linejoin="round"/>
<polyline points="112.3,56.7 114.3,55.5 116.8,54.4 120.8,51.9 121.8,51.6 122.8,52.0 126.3,56.0 126.8,56.4 128.3,56.8 137.3,56.8 140.8,57.0 147.3,56.6 154.3,56.7 159.8,56.5" fill="none" stroke="#ff0000" stroke-width="2.3" stroke-linejoin="round" stroke-linecap="round"/>
<polyline points="159.6,56.5 160.6,56.4 162.1,56.7 163.1,56.5 164.6,56.6 165.1,56.5 169.1,56.9 170.1,56.7 173.1,56.7 175.1,56.4 179.6,56.9 180.6,56.7 181.1,56.8 182.1,56.7 183.1,56.8 186.1,56.4 188.1,56.5 189.1,56.8 190.1,56.8 192.1,56.4 192.6,56.5 193.6,56.1 194.6,56.0 195.6,55.7 197.1,55.8 201.1,56.7 202.6,56.8 204.1,58.8 205.6,48.5 206.1,49.8 207.1,56.2 207.6,57.0 208.1,57.1 208.6,57.0 210.6,57.3 211.6,57.2 213.1,57.4 213.6,57.2 214.6,57.4 218.1,57.3 219.1,56.8 221.6,56.6 224.6,55.8 229.1,55.3 233.1,56.1 234.1,56.2 235.1,56.5 236.6,56.3 238.1,56.5 239.1,56.3 240.6,56.4" fill="none" stroke="#161616" stroke-width="1.35" stroke-linejoin="round"/>
<polyline points="240.3,56.6 245.3,54.2 249.3,51.7 249.8,51.7 250.8,52.1 254.3,56.0 255.3,56.6 255.8,56.6 258.8,56.9 263.8,56.7 269.3,56.9 270.8,56.7 273.3,56.8 279.3,56.6 287.8,56.9" fill="none" stroke="#ff0000" stroke-width="2.3" stroke-linejoin="round" stroke-linecap="round"/>
<polyline points="287.6,56.7 288.1,57.0 291.6,56.7 292.1,56.9 292.6,56.8 296.1,57.2 300.6,57.0 303.1,56.5 303.6,56.6 305.1,56.4 308.1,56.6 311.1,57.1 312.1,56.8 312.6,56.9 313.6,56.7 315.1,57.0 320.1,56.5 320.6,56.1 321.6,55.7 323.1,55.5 324.6,55.7 325.1,55.6 328.1,56.6 330.1,56.7 331.1,56.9 332.6,59.0 334.1,48.6 334.6,49.9 335.6,56.2 336.1,57.2 338.6,57.1 341.1,57.5 342.6,57.4 345.1,57.7 347.1,57.2 349.6,56.9 351.6,56.3 355.1,55.7 355.6,55.4 357.1,55.4 360.1,55.7 364.1,55.8 365.1,56.0 366.1,56.0 367.1,56.4 367.6,56.3 369.1,57.0 371.6,56.9 372.6,57.1 373.6,56.8 376.1,56.8 376.6,56.5 379.1,56.2 380.1,56.4 382.1,56.1 384.6,56.1 386.6,55.6 388.6,56.1 390.6,56.1 391.6,56.3 392.1,56.2 394.1,56.4 395.1,58.3 395.6,56.5 396.6,49.2 397.1,48.2 398.6,56.5 401.1,56.7 401.6,56.6 404.6,57.0 405.6,56.8 407.6,57.1 410.1,57.1 412.1,56.8 412.6,56.5 413.6,56.4 414.1,56.1 415.6,55.8 417.6,55.5 422.6,55.9 423.6,56.3 425.6,56.1 427.6,56.5 429.6,56.4 431.5,56.7 433.0,56.5 435.5,56.4 438.0,56.6 443.0,56.6 443.5,56.3 444.5,56.2 446.5,55.6 448.0,55.5 449.5,55.8 450.0,56.1 451.0,56.0 453.0,56.7 455.5,56.6 456.0,56.9 457.0,58.6 458.5,48.4 459.0,49.7 460.0,55.7 460.5,56.6 461.5,56.6 465.0,57.1 467.0,57.5 470.0,57.1 471.5,57.2 475.0,56.3 475.5,56.4 478.5,55.8 480.5,55.7 482.5,56.1 485.0,56.0 488.0,56.4 489.0,56.4 490.0,56.7 496.5,56.4 499.5,57.0 501.5,57.0 505.5,56.2 506.5,55.8 508.0,55.7 509.0,55.9 511.0,55.8 514.5,56.4 517.5,55.9" fill="none" stroke="#161616" stroke-width="1.35" stroke-linejoin="round"/>
<polyline points="32.3,101.0 33.3,101.6 37.8,105.8 39.3,107.0 42.8,107.5 45.3,106.9 45.8,106.5 47.3,106.4 50.3,105.3 52.3,105.3 53.8,105.1 56.8,105.7 59.8,106.0 62.8,105.1 64.8,103.9 66.3,103.4 69.8,104.4 70.8,105.1 71.8,105.4 75.3,105.7 75.8,105.5 77.3,99.6 77.8,101.1 78.8,109.0 79.8,113.7 83.3,107.1 85.8,107.1 91.3,106.1 93.3,105.6 94.8,105.0 97.8,103.4 99.3,103.1 101.8,103.1 104.3,104.2 104.8,104.3 105.8,104.9 108.3,105.7 110.8,105.8 112.3,105.7" fill="none" stroke="#161616" stroke-width="1.35" stroke-linejoin="round"/>
<polyline points="112.3,105.7 112.8,103.5 114.8,101.2 115.8,99.6 116.8,96.6 119.8,85.1 120.8,82.5 121.3,81.8 121.8,81.5 122.3,81.8 122.8,82.8 123.3,84.8 125.8,102.9 126.8,107.6 127.8,110.2 128.8,111.8 130.3,113.5 133.3,115.9 136.8,117.8 137.8,118.1 138.8,117.8 141.3,116.4 142.8,114.6 146.3,108.3 148.8,105.1 149.8,104.5 158.3,104.6 159.3,105.0 159.8,105.7" fill="none" stroke="#ff0000" stroke-width="2.3" stroke-linejoin="round" stroke-linecap="round"/>
<polyline points="159.6,105.0 160.1,105.7 162.6,105.8 166.1,105.5 167.1,105.8 167.6,105.6 170.1,105.8 172.1,106.2 172.6,106.0 174.6,106.0 175.1,105.8 178.1,105.7 178.6,105.9 179.6,105.8 180.1,106.0 182.1,106.3 190.1,105.4 192.1,104.7 194.1,103.4 195.6,103.2 197.6,104.0 199.6,105.2 201.6,105.7 202.6,105.9 203.1,105.8 203.6,106.0 204.1,105.9 205.6,99.9 206.1,100.9 207.1,108.5 208.1,113.8 211.6,106.4 213.6,106.9 216.1,106.7 218.1,106.9 219.1,106.6 220.1,105.9 220.6,105.9 224.6,103.9 228.6,103.4 233.6,104.4 234.6,104.9 236.1,105.3 239.1,105.7 240.1,105.6 240.6,104.2" fill="none" stroke="#161616" stroke-width="1.35" stroke-linejoin="round"/>
<polyline points="240.3,105.7 240.8,103.9 242.8,102.2 243.8,100.9 244.8,98.6 247.8,89.5 248.8,87.5 249.3,86.9 249.8,86.9 250.3,87.0 250.8,87.7 251.3,89.3 253.8,103.5 254.3,105.7 255.3,108.3 256.3,109.9 257.3,111.0 264.3,115.1 265.3,115.4 266.3,115.4 269.8,113.4 273.8,108.2 276.3,105.6 277.8,104.7 285.8,104.5 286.8,104.7 287.8,105.3" fill="none" stroke="#ff0000" stroke-width="2.3" stroke-linejoin="round" stroke-linecap="round"/>
<polyline points="287.6,105.0 289.6,105.8 292.1,106.1 296.1,105.8 298.6,105.3 299.1,105.5 301.1,105.4 304.1,105.9 305.6,105.9 306.6,106.0 313.1,106.2 315.1,105.7 315.6,105.8 319.6,104.7 322.6,103.3 324.1,103.3 326.1,104.0 327.6,104.9 329.1,105.5 332.1,105.7 332.6,105.5 334.1,99.6 334.6,100.5 335.1,103.4 335.6,108.2 336.6,113.6 338.1,110.6 340.1,107.2 341.6,107.5 342.6,107.3 344.1,107.3 346.6,106.3 348.6,105.8 350.1,105.2 351.6,105.1 354.1,103.8 355.6,103.5 356.1,103.6 357.1,103.2 359.1,103.5 363.1,105.0 364.1,105.1 365.6,105.6 366.1,105.6 366.6,105.9 368.6,106.1 369.1,106.0 370.1,106.2 372.1,106.1 374.1,105.6 377.1,105.3 378.1,105.3 380.1,105.7 383.1,104.8 384.1,104.0 386.1,103.2 387.1,103.3 390.1,105.0 391.1,105.4 393.6,105.9 395.1,105.7 396.6,100.2 397.1,99.4 397.6,101.7 398.6,110.4 399.1,112.9 399.6,112.8 401.6,108.9 402.6,107.3 403.1,106.8 406.6,107.0 409.6,106.5 411.6,105.9 416.6,103.5 418.6,102.9 419.1,102.8 423.1,103.5 425.1,104.6 427.6,105.2 428.6,105.8 429.6,106.0 431.0,106.1 433.0,105.8 440.0,105.7 443.5,104.9 447.0,103.6 448.0,103.6 449.5,104.0 451.0,104.8 452.0,105.1 455.0,105.3 456.0,105.6 457.0,105.4 458.5,99.5 459.0,100.6 460.0,108.6 461.0,113.9 464.5,106.9 468.0,106.7 469.0,106.9 472.0,106.5 473.0,106.2 475.0,105.3 476.5,104.9 478.0,104.1 481.0,103.5 482.0,103.4 483.5,103.7 485.0,104.2 492.0,106.1 492.5,106.0 493.5,106.3 496.5,106.3 498.0,105.8 500.0,105.7 500.5,105.5 501.5,105.5 503.5,105.1 504.5,105.2 507.0,104.3 508.5,103.4 509.0,103.5 511.5,103.8 512.5,104.5 515.0,105.6 517.5,106.3" fill="none" stroke="#161616" stroke-width="1.35" stroke-linejoin="round"/>
<polyline points="32.3,152.0 33.3,152.1 35.3,152.9 38.8,155.4 41.3,156.1 42.8,156.0 43.8,155.7 45.3,155.6 47.8,154.8 50.8,154.5 54.8,154.5 56.8,154.7 59.3,155.2 60.8,155.3 63.3,154.8 65.8,153.8 66.8,153.7 68.3,153.9 69.3,154.4 70.8,154.4 72.3,154.7 75.3,154.7 75.8,154.5 77.3,151.6 77.8,152.3 78.3,154.9 78.8,159.1 79.8,164.4 83.3,155.8 84.3,155.8 86.8,155.3 88.8,155.4 92.3,154.9 94.3,154.9 95.8,154.6 97.3,154.6 100.8,154.0 102.8,154.7 103.8,154.7 104.3,155.0 105.8,155.1 107.3,155.5 112.3,155.1" fill="none" stroke="#161616" stroke-width="1.35" stroke-linejoin="round"/>
<polyline points="112.3,155.1 112.8,153.6 114.8,151.2 115.8,149.5 116.8,147.1 119.8,138.0 120.8,136.0 121.3,135.4 121.8,135.2 122.3,135.4 122.8,136.1 123.3,137.6 124.3,142.8 125.8,152.4 126.8,156.4 127.3,157.4 128.8,160.0 129.8,161.1 131.8,162.8 134.3,164.5 136.3,165.5 137.3,165.9 138.3,165.9 141.3,164.3 142.8,162.8 145.3,159.1 146.8,157.2 148.8,155.2 149.8,154.6 155.3,154.7 158.8,154.5 159.8,155.0" fill="none" stroke="#ff0000" stroke-width="2.3" stroke-linejoin="round" stroke-linecap="round"/>
<polyline points="159.6,154.8 160.6,155.1 161.6,154.9 162.6,155.3 164.1,155.4 166.1,155.4 167.1,155.2 167.6,155.4 169.1,155.0 176.1,155.4 178.1,154.9 179.1,155.0 182.6,154.7 184.6,154.9 186.6,154.5 189.1,154.5 191.6,153.9 193.1,153.7 195.6,154.0 196.6,153.8 198.6,154.5 202.1,155.0 203.6,155.6 204.1,155.5 205.6,152.3 206.1,152.6 206.6,154.6 207.1,158.6 208.1,164.0 211.6,155.5 214.1,155.6 217.6,155.2 218.1,155.3 220.6,155.2 229.6,154.1 230.6,154.4 232.6,154.5 234.1,154.9 237.6,154.9 238.6,155.1 239.6,154.9 240.1,155.0 240.6,154.1" fill="none" stroke="#161616" stroke-width="1.35" stroke-linejoin="round"/>
<polyline points="240.3,155.0 240.8,153.9 243.3,151.4 243.8,150.7 247.8,140.4 248.8,138.6 249.3,138.1 249.8,137.9 250.3,138.0 250.8,138.7 251.3,140.0 252.3,144.5 253.8,152.8 254.8,156.1 255.8,158.1 257.3,159.9 259.8,161.7 261.8,162.7 264.8,164.0 265.8,164.2 267.3,163.9 269.3,163.0 270.8,161.7 273.3,158.4 275.3,156.3 276.8,154.9 277.8,154.6 281.3,154.4 286.3,154.4 287.8,154.9" fill="none" stroke="#ff0000" stroke-width="2.3" stroke-linejoin="round" stroke-linecap="round"/>
<polyline points="287.6,154.7 290.1,154.8 292.1,155.0 294.1,154.9 295.6,155.3 296.1,155.1 297.6,155.4 298.6,155.1 299.1,155.2 301.6,155.0 302.6,155.0 304.6,154.7 307.6,154.9 308.1,154.7 310.1,154.7 310.6,155.0 314.6,155.2 319.1,154.6 321.6,153.8 323.1,153.9 323.6,153.7 327.1,154.5 330.6,154.8 332.6,154.6 334.1,151.8 334.6,152.2 335.1,154.3 336.1,161.6 336.6,164.0 340.1,155.6 340.6,155.3 342.6,155.3 344.1,155.1 345.6,155.3 346.6,155.1 349.6,155.4 351.1,155.2 355.6,154.0 357.1,154.3 358.1,154.2 359.6,154.5 360.6,154.5 361.1,154.7 363.1,154.6 364.1,155.0 365.1,155.0 366.1,154.8 366.6,155.0 367.6,155.0 368.1,155.2 374.1,155.0 374.6,154.8 376.6,154.8 381.1,155.1 382.6,154.8 384.6,154.1 386.6,153.9 390.1,154.9 391.6,155.0 393.1,154.9 394.6,155.1 395.1,155.1 395.6,154.5 396.6,152.2 397.1,151.8 397.6,153.0 399.1,163.3 399.6,163.2 402.1,157.2 403.1,155.6 406.1,155.9 410.6,155.2 414.1,155.2 416.1,154.9 418.6,154.2 422.6,154.4 425.1,154.9 427.1,154.8 429.1,155.0 432.5,154.9 435.0,155.2 435.5,155.1 436.5,155.3 438.5,155.2 439.0,155.3 441.5,154.6 442.5,154.7 445.5,154.3 447.0,153.9 448.0,154.2 449.5,154.1 453.0,154.9 454.5,154.9 456.5,155.2 457.0,155.0 458.5,151.6 459.0,152.3 459.5,154.3 460.5,161.6 461.0,163.9 464.5,155.9 465.0,155.7 467.5,155.9 468.5,155.5 471.0,155.7 473.5,155.6 474.0,155.3 475.5,155.2 478.0,154.4 479.5,154.1 480.0,154.3 481.0,154.0 483.0,154.0 483.5,154.3 485.0,154.5 485.5,154.7 486.5,154.6 488.0,155.1 490.0,154.8 491.0,154.9 492.0,154.7 493.0,155.1 494.5,155.1 496.5,155.4 497.5,155.2 498.0,155.4 499.5,155.0 500.5,155.1 501.5,154.9 502.5,155.1 505.0,154.8 509.0,153.6 511.0,153.7 514.0,154.5 517.5,154.5" fill="none" stroke="#161616" stroke-width="1.35" stroke-linejoin="round"/>
<polyline points="32.3,205.6 33.8,205.4 36.3,204.1 36.8,204.2 37.8,203.6 39.8,202.8 42.3,203.2 43.3,203.0 44.8,203.4 47.3,203.5 52.3,204.3 53.3,204.1 56.8,204.2 57.8,204.0 61.8,204.0 62.8,204.2 63.8,204.8 64.8,204.7 66.3,205.2 67.3,205.2 68.8,204.8 69.3,204.5 70.8,204.4 71.3,204.5 72.8,204.3 75.3,204.4 75.8,204.1 77.3,200.8 77.8,201.7 78.3,203.6 78.8,206.8 79.3,208.9 79.8,210.2 83.3,203.6 84.3,203.2 85.8,203.3 87.8,203.7 88.3,203.6 89.8,203.6 91.3,204.0 93.3,204.1 96.3,204.7 98.8,205.0 100.3,204.7 101.3,204.8 105.3,203.9 105.8,204.0 107.8,203.8 108.8,203.4 109.8,203.7 112.3,203.9" fill="none" stroke="#161616" stroke-width="1.35" stroke-linejoin="round"/>
<polyline points="112.3,203.9 112.8,204.7 115.8,207.7 116.8,208.9 117.8,210.3 121.3,216.8 121.8,217.2 122.3,217.2 122.8,216.7 123.3,215.6 125.8,205.7 126.8,203.2 129.3,200.5 130.3,199.8 131.3,199.3 135.3,198.0 137.8,197.6 140.3,198.5 142.3,199.5 146.8,203.3 148.3,204.0 150.8,204.3 155.8,203.8 159.8,204.1" fill="none" stroke="#ff0000" stroke-width="2.3" stroke-linejoin="round" stroke-linecap="round"/>
<polyline points="159.6,204.1 162.1,204.4 163.6,204.3 164.6,204.4 166.6,204.3 167.1,204.0 168.6,204.1 169.1,203.9 170.6,203.8 174.6,204.1 175.1,204.3 181.6,203.9 182.6,204.2 184.1,204.0 186.6,204.1 189.1,204.0 190.1,204.3 190.6,204.1 193.1,204.9 195.6,205.2 198.6,204.5 199.1,204.2 200.1,203.9 204.1,203.6 205.6,200.5 206.1,200.9 206.6,202.7 207.6,208.4 208.1,210.1 211.6,203.4 212.1,203.3 216.6,203.0 222.1,203.8 223.1,204.1 224.6,204.0 225.1,204.3 227.1,204.8 228.1,204.8 228.6,204.6 231.6,204.8 233.1,204.4 235.1,204.3 237.6,203.7 239.6,203.9 240.1,203.8 240.6,204.5" fill="none" stroke="#161616" stroke-width="1.35" stroke-linejoin="round"/>
<polyline points="240.3,203.8 240.8,204.6 244.8,208.2 249.3,214.8 249.8,215.2 250.3,215.2 250.8,214.8 251.3,213.8 253.8,205.5 254.8,203.5 258.3,200.8 264.8,198.7 265.3,198.5 266.8,198.7 269.3,199.5 270.3,200.0 273.8,203.0 274.8,203.6 275.8,203.8 281.3,204.2 287.3,204.2 287.8,204.4" fill="none" stroke="#ff0000" stroke-width="2.3" stroke-linejoin="round" stroke-linecap="round"/>
<polyline points="287.6,204.1 288.1,204.3 290.6,204.1 295.6,204.2 297.1,204.1 297.6,203.9 302.1,203.7 302.6,203.6 303.6,203.7 305.6,203.7 306.6,203.9 307.6,203.8 309.6,204.1 310.1,203.9 311.1,204.2 314.1,204.0 318.1,204.0 321.1,205.2 323.1,205.5 325.1,205.3 326.1,204.7 327.6,204.2 332.1,204.2 332.6,204.0 334.1,200.7 334.6,201.2 335.1,203.0 335.6,206.1 336.6,209.8 340.1,203.1 341.1,202.6 342.6,202.6 343.1,202.4 344.1,202.7 345.1,202.7 346.6,202.9 348.6,203.6 352.6,204.1 355.6,204.8 356.6,204.7 359.1,204.9 361.6,204.4 363.1,204.5 366.1,203.9 367.6,204.0 369.1,203.8 373.1,204.2 378.1,203.9 378.6,204.1 382.1,204.3 383.6,204.8 385.1,205.1 386.1,204.9 388.1,205.1 389.6,204.4 391.6,203.9 395.1,203.9 395.6,203.4 396.6,201.2 397.1,200.9 397.6,202.1 398.6,207.8 399.1,209.6 399.6,209.6 402.6,203.3 403.1,202.8 410.6,203.6 413.1,204.1 414.6,204.0 415.6,204.1 420.1,204.6 421.1,204.9 427.1,203.8 430.5,203.8 432.0,204.0 432.5,203.7 434.5,203.8 435.5,203.6 437.0,203.9 443.5,204.1 446.0,204.7 446.5,205.0 448.5,205.1 449.5,204.9 450.5,205.0 453.0,204.5 453.5,204.8 457.0,204.4 458.5,201.3 459.0,201.6 459.5,203.4 460.0,206.6 461.0,210.5 464.5,203.6 465.5,203.7 466.5,203.5 468.5,203.8 469.5,203.5 472.0,203.7 475.0,204.3 478.0,204.6 479.0,204.5 480.0,204.9 482.0,205.1 485.0,204.8 486.5,204.3 487.5,204.4 488.5,204.1 490.5,204.1 493.5,203.7 494.5,203.8 496.5,203.6 501.5,204.0 502.0,204.2 503.0,203.9 504.0,203.9 504.5,204.1 506.0,203.9 510.0,205.2 512.5,204.9 514.5,204.2 517.5,204.5" fill="none" stroke="#161616" stroke-width="1.35" stroke-linejoin="round"/>
<polyline points="32.3,254.8 32.8,254.8 35.3,253.6 39.8,253.1 40.8,253.4 41.8,253.4 43.3,253.7 43.8,253.6 45.3,254.1 46.3,254.1 47.8,254.1 52.8,253.1 54.3,253.3 55.8,253.1 56.8,253.5 59.3,253.9 61.3,253.4 63.8,253.6 65.3,253.3 67.3,253.6 70.3,253.5 72.8,253.7 74.3,253.6 75.8,254.8 77.3,248.4 77.8,249.4 78.8,253.0 79.3,253.5 85.8,253.0 86.8,253.0 87.8,253.3 89.8,253.3 91.8,252.9 97.8,253.2 98.8,252.9 100.3,253.0 102.3,252.6 105.8,253.1 107.3,253.0 108.8,253.5 112.3,253.4" fill="none" stroke="#161616" stroke-width="1.35" stroke-linejoin="round"/>
<polyline points="112.3,253.4 113.8,254.6 116.8,256.5 119.8,259.7 120.8,260.4 121.3,260.3 122.8,259.3 123.8,258.1 126.3,254.2 129.3,251.7 130.3,251.1 132.8,250.4 134.3,249.7 137.3,248.9 138.3,248.9 141.3,249.9 142.8,250.7 145.3,252.7 147.3,253.5 148.8,253.6 154.8,253.2 159.8,253.4" fill="none" stroke="#ff0000" stroke-width="2.3" stroke-linejoin="round" stroke-linecap="round"/>
<polyline points="159.6,253.4 160.6,253.4 161.1,253.6 165.1,253.8 171.1,253.1 172.1,253.4 174.6,253.3 177.6,253.6 180.1,253.5 180.6,253.7 186.6,253.3 188.6,253.5 190.1,253.2 193.6,253.4 195.1,253.2 196.6,253.4 197.6,253.3 198.1,253.6 199.6,253.7 202.6,253.7 204.1,255.1 205.6,248.1 206.1,248.9 207.1,252.6 207.6,253.0 210.6,252.8 216.6,253.4 220.1,253.1 222.1,253.5 223.1,253.4 223.6,253.5 224.6,253.2 227.1,253.1 228.6,252.6 232.1,252.8 234.6,253.4 236.6,253.3 240.1,253.4 240.6,253.7" fill="none" stroke="#161616" stroke-width="1.35" stroke-linejoin="round"/>
<polyline points="240.3,253.5 245.3,256.4 248.3,259.2 249.3,259.4 250.3,259.0 251.3,258.0 254.8,253.8 258.8,251.5 260.8,251.1 263.3,250.1 265.3,249.7 266.8,249.7 268.8,250.3 270.8,251.2 272.8,252.6 274.3,253.3 284.3,253.2 287.8,253.5" fill="none" stroke="#ff0000" stroke-width="2.3" stroke-linejoin="round" stroke-linecap="round"/>
<polyline points="287.6,253.4 288.1,253.3 292.6,253.8 295.6,253.7 296.1,253.8 299.1,253.6 299.6,253.8 300.6,253.9 302.6,253.5 303.1,253.7 305.1,253.5 306.1,253.0 309.1,253.5 310.1,253.3 312.1,253.5 315.1,253.2 316.1,252.9 316.6,253.1 317.6,252.9 319.6,253.1 320.6,252.9 323.6,253.3 326.1,253.0 328.6,253.2 329.6,253.0 331.1,253.2 332.6,254.6 334.1,248.0 334.6,248.7 335.6,252.4 336.1,252.9 338.1,252.9 338.6,253.1 340.1,253.0 342.1,253.4 345.1,253.1 346.6,253.4 348.6,253.0 350.6,253.1 352.6,252.6 356.1,253.0 358.6,253.0 360.1,252.8 363.6,253.5 366.1,253.6 366.6,253.5 369.6,253.4 372.1,253.5 376.6,252.9 383.1,254.1 385.1,253.6 387.1,253.5 388.6,253.7 389.6,253.6 391.1,253.8 394.1,253.7 395.1,254.7 395.6,253.6 396.6,249.1 397.1,248.4 398.6,253.4 400.6,253.2 402.6,253.6 404.1,253.5 407.6,253.8 409.1,253.6 411.1,253.9 416.6,253.2 417.6,252.8 419.6,253.2 422.1,253.1 423.6,253.4 425.1,253.2 426.6,253.5 429.6,253.4 431.5,253.6 433.5,253.3 434.0,253.5 434.5,253.5 435.0,253.8 436.0,253.6 438.5,253.5 439.5,253.7 441.5,253.5 445.5,253.4 451.5,253.7 454.0,253.4 455.5,253.6 457.0,255.1 458.5,248.6 459.0,249.4 460.0,253.3 460.5,253.6 461.5,253.6 462.5,253.3 465.0,253.5 466.0,253.3 467.0,253.6 467.5,253.3 469.0,253.7 469.5,253.4 473.5,253.6 475.5,253.5 477.0,253.0 479.0,253.1 482.0,252.8 483.0,253.2 484.5,253.2 485.0,253.1 487.0,253.4 487.5,253.2 488.5,253.5 490.0,253.3 492.5,253.5 495.5,253.2 497.5,253.4 499.0,253.1 500.0,253.2 504.0,252.9 508.5,253.9 509.5,253.8 510.5,254.0 512.5,253.4 514.0,253.4 517.5,252.9" fill="none" stroke="#161616" stroke-width="1.35" stroke-linejoin="round"/>
<polyline points="32.3,297.2 33.8,298.0 34.8,298.9 37.3,301.6 38.3,302.3 38.8,302.9 41.3,304.0 44.3,303.5 47.3,302.2 50.8,301.6 52.3,301.8 54.3,301.7 56.3,302.2 57.8,302.1 59.3,302.5 60.3,302.5 61.8,302.2 63.8,301.0 64.8,300.7 65.3,300.2 66.8,299.7 67.8,300.0 68.8,300.5 71.8,301.6 73.3,301.8 75.8,301.8 77.3,299.8 77.8,300.2 78.3,302.3 79.3,308.5 79.8,310.6 83.3,302.8 84.3,303.0 86.3,302.6 88.8,302.5 89.8,302.1 90.8,302.1 93.3,301.9 96.3,301.1 97.8,300.4 99.8,300.1 102.8,300.5 105.8,301.3 106.8,301.3 109.8,301.9 112.3,302.0" fill="none" stroke="#161616" stroke-width="1.35" stroke-linejoin="round"/>
<polyline points="112.3,302.0 112.8,299.6 115.3,296.7 116.3,294.8 119.8,284.0 120.8,282.0 121.3,281.4 121.8,281.1 122.3,281.3 122.8,282.1 123.3,283.8 125.8,299.7 126.8,303.9 127.8,306.4 129.3,308.8 131.3,310.4 136.8,314.0 138.3,314.2 140.3,313.1 141.8,312.0 142.8,310.7 146.8,304.0 148.3,302.0 149.3,301.0 151.8,300.7 157.8,300.7 158.8,300.9 159.3,301.2 159.8,302.2" fill="none" stroke="#ff0000" stroke-width="2.3" stroke-linejoin="round" stroke-linecap="round"/>
<polyline points="159.6,301.3 160.1,302.3 161.1,302.4 162.1,302.4 163.1,302.0 164.6,302.2 167.1,301.8 169.6,301.9 170.1,301.6 170.6,301.6 174.1,301.8 178.6,302.4 180.6,302.1 185.6,301.7 189.6,302.0 191.6,301.3 192.1,301.3 193.1,300.7 195.6,300.4 199.6,301.8 202.6,301.8 203.6,301.9 204.1,301.8 205.6,299.9 206.1,300.2 206.6,301.9 208.1,310.8 211.6,302.8 213.1,302.5 219.1,302.6 222.6,301.4 224.6,300.5 228.1,299.9 231.6,300.2 233.1,300.9 235.6,301.5 236.6,301.9 238.1,302.0 239.1,301.7 240.1,301.9 240.6,300.3" fill="none" stroke="#161616" stroke-width="1.35" stroke-linejoin="round"/>
<polyline points="240.3,301.9 240.8,300.0 243.3,297.4 244.3,295.7 247.3,287.8 248.8,284.9 249.3,284.4 249.8,284.2 250.3,284.3 250.8,284.9 251.3,286.4 253.8,299.9 254.8,303.5 255.8,305.8 257.3,307.8 260.3,309.9 264.8,312.3 266.3,312.4 269.3,310.9 270.3,309.9 273.3,305.5 275.8,302.3 276.8,301.4 277.8,300.9 279.3,300.8 282.3,301.1 283.8,300.9 286.3,301.0 287.3,301.3 287.8,302.0" fill="none" stroke="#ff0000" stroke-width="2.3" stroke-linejoin="round" stroke-linecap="round"/>
<polyline points="287.6,301.4 288.1,302.0 288.6,302.1 290.6,301.7 293.6,302.0 295.1,301.8 298.1,301.9 299.1,301.7 300.6,301.7 302.6,302.0 303.6,302.0 305.6,302.4 306.1,302.3 307.1,302.4 308.6,302.1 309.6,302.1 313.6,301.5 314.6,301.7 318.6,301.9 319.1,301.8 320.1,301.1 321.6,300.4 323.6,300.1 325.1,300.6 326.6,301.5 327.6,301.8 331.6,301.6 332.6,301.8 334.1,299.9 334.6,300.3 335.1,301.8 336.6,310.9 340.1,302.8 340.6,303.0 346.6,302.6 347.6,302.2 349.6,301.7 350.1,301.4 351.6,301.3 352.6,300.7 355.6,299.8 358.1,299.9 363.1,301.7 366.1,302.3 367.6,302.2 368.1,302.5 370.6,302.0 377.6,302.9 381.6,301.7 385.1,299.9 387.6,299.9 388.6,300.5 390.6,301.1 391.6,301.6 394.1,302.2 395.1,302.1 396.6,300.3 397.1,300.1 397.6,301.0 399.1,310.0 399.6,309.9 402.6,303.2 403.1,302.8 405.6,302.5 406.6,302.7 408.1,302.4 408.6,302.5 410.1,302.0 411.6,302.1 414.1,301.4 416.1,300.6 417.1,300.6 418.1,300.1 419.1,300.0 422.6,300.0 424.6,300.7 427.6,301.3 429.1,302.0 429.6,301.9 430.5,302.1 432.0,302.0 432.5,302.1 436.0,302.0 440.0,302.4 442.0,302.2 446.0,300.2 447.5,299.8 448.5,300.0 450.0,300.5 451.0,301.2 452.0,301.4 453.0,301.9 456.5,301.9 457.0,301.8 458.5,299.9 459.0,300.2 459.5,301.9 461.0,310.8 464.5,303.1 465.0,302.9 466.5,302.9 467.5,303.0 469.0,302.6 470.5,302.4 471.5,302.5 474.0,301.5 476.5,300.9 477.5,301.0 479.5,300.3 484.0,300.2 485.0,300.8 487.5,301.5 488.5,301.3 493.0,302.2 494.0,302.1 495.0,302.3 496.5,302.3 497.5,301.9 498.5,302.1 499.0,301.8 501.0,302.3 502.5,302.4 505.0,301.9 507.5,300.5 509.0,300.0 510.0,300.0 511.0,300.2 512.0,300.9 514.5,301.9 517.5,302.5" fill="none" stroke="#161616" stroke-width="1.35" stroke-linejoin="round"/>
<polyline points="32.3,353.8 35.3,353.2 37.3,352.5 42.3,351.7 44.8,352.2 45.8,352.1 46.8,352.4 48.8,352.7 52.8,352.8 53.3,352.7 54.8,352.9 61.3,352.0 62.3,351.6 66.8,350.9 68.3,351.3 68.8,351.6 71.3,352.0 72.3,352.1 73.3,351.9 74.3,352.0 75.3,351.9 75.8,351.5 77.3,346.2 77.8,347.3 78.3,351.4 79.3,364.0 79.8,367.5 83.3,350.3 84.8,349.9 85.8,349.8 86.8,349.9 89.3,349.5 92.8,349.6 93.8,349.5 96.3,349.9 96.8,349.6 98.8,349.8 99.8,349.5 101.8,349.3 103.8,349.8 104.8,349.8 106.3,350.4 106.8,350.4 107.3,350.7 109.8,351.1 110.8,351.5 112.3,351.6" fill="none" stroke="#161616" stroke-width="1.35" stroke-linejoin="round"/>
<polyline points="112.3,351.6 112.8,350.7 113.3,350.4 113.8,351.0 114.3,352.3 116.3,361.0 119.8,379.2 120.3,381.2 120.8,382.3 121.3,382.8 121.8,382.4 122.3,381.3 122.8,379.0 123.3,375.6 125.3,356.5 126.8,347.3 127.8,343.8 128.3,342.8 130.8,339.6 133.3,337.9 136.3,336.2 137.8,335.6 138.3,335.8 139.3,336.5 140.8,338.6 141.8,340.6 144.8,347.9 146.3,350.7 147.3,351.9 147.8,352.2 148.8,352.5 157.8,352.1 159.8,352.5" fill="none" stroke="#ff0000" stroke-width="2.3" stroke-linejoin="round" stroke-linecap="round"/>
<polyline points="159.6,352.3 164.1,353.0 166.1,352.5 166.6,352.7 167.6,352.4 169.6,352.3 174.1,352.5 175.1,352.3 176.6,352.6 177.1,352.4 177.6,352.5 180.1,352.4 180.6,352.5 185.6,352.0 189.1,352.3 191.1,351.9 193.6,350.7 194.6,350.5 195.6,350.6 197.1,351.4 199.6,352.2 201.6,352.2 202.6,351.9 204.1,352.0 205.6,346.9 206.1,348.0 206.6,351.5 207.1,358.6 208.1,368.2 211.6,350.4 212.1,349.9 213.1,349.5 215.1,349.9 218.1,349.2 219.1,349.4 220.6,349.3 222.6,349.7 228.6,349.1 231.6,349.7 233.1,350.2 233.6,350.2 238.1,351.4 240.1,351.7 240.6,350.9" fill="none" stroke="#161616" stroke-width="1.35" stroke-linejoin="round"/>
<polyline points="240.3,351.6 240.8,350.6 241.3,350.3 241.8,351.0 242.3,352.4 244.3,361.6 247.8,380.7 248.8,383.9 249.3,384.3 249.8,384.0 250.3,382.7 250.8,380.2 253.3,356.6 254.8,346.9 255.8,343.3 256.3,342.3 259.3,338.6 265.3,334.8 266.3,334.8 267.8,336.1 268.8,337.6 272.3,346.4 274.3,350.4 275.3,351.7 276.3,352.2 282.8,352.4 287.8,352.1" fill="none" stroke="#ff0000" stroke-width="2.3" stroke-linejoin="round" stroke-linecap="round"/>
<polyline points="287.6,352.2 290.6,352.2 293.6,352.5 295.1,352.1 296.6,352.3 299.6,352.3 300.1,352.6 300.6,352.5 301.6,352.7 304.1,352.5 305.1,352.8 306.6,352.7 308.1,352.4 309.6,352.5 312.6,352.1 314.1,352.4 315.6,351.9 318.6,352.0 319.6,351.5 321.6,351.2 322.6,350.8 324.6,350.7 325.6,351.0 326.1,351.4 327.6,351.6 329.1,352.3 331.6,352.7 332.6,352.4 334.1,347.0 334.6,347.7 335.1,351.0 335.6,358.0 336.6,368.0 340.1,350.2 341.1,349.7 342.1,349.7 342.6,349.5 343.1,349.6 347.6,349.6 349.6,349.3 350.1,349.4 354.6,348.6 362.1,349.9 367.6,351.5 373.1,351.5 375.1,351.8 378.6,351.9 380.1,352.2 382.1,352.1 386.6,350.6 388.1,350.8 389.6,351.4 390.6,351.4 391.6,351.9 395.1,352.2 396.6,347.6 397.1,346.8 397.6,348.7 399.1,366.6 399.6,366.4 402.6,351.2 403.1,350.0 406.6,349.5 409.6,349.5 411.1,349.2 414.1,349.3 416.1,349.0 417.1,349.1 417.6,348.9 418.6,348.9 419.1,349.1 420.1,348.9 422.1,349.3 423.1,349.2 425.6,350.2 429.1,351.1 433.0,351.5 437.5,352.4 438.5,352.3 439.5,352.5 441.0,352.2 441.5,352.4 442.5,352.4 446.0,351.0 448.0,350.8 449.0,350.9 450.0,351.4 452.0,351.8 452.5,352.2 453.5,352.1 454.0,352.2 455.5,351.9 456.5,352.0 457.0,351.8 458.5,346.7 459.0,347.4 459.5,350.9 460.5,363.6 461.0,367.8 464.5,350.3 465.0,349.9 465.5,349.8 468.5,349.7 472.5,348.9 475.0,349.0 476.5,349.3 478.0,349.3 479.0,349.6 479.5,349.4 481.5,349.7 483.0,349.5 486.0,350.2 487.0,350.3 487.5,350.2 489.0,351.0 493.5,352.2 497.5,352.6 498.0,352.4 501.5,352.3 502.5,351.9 503.5,351.9 505.0,351.5 505.5,351.7 506.0,351.4 507.0,351.3 509.0,350.7 510.0,350.7 512.0,351.3 513.0,351.3 514.0,351.8 516.0,352.3 517.5,352.4" fill="none" stroke="#161616" stroke-width="1.35" stroke-linejoin="round"/>
<polyline points="32.3,403.2 36.8,401.7 39.3,401.7 40.8,401.9 41.3,401.8 42.3,402.0 43.8,401.9 45.8,402.2 47.3,402.1 50.8,402.6 52.8,402.4 55.3,402.6 56.8,402.3 59.8,402.3 63.8,401.3 65.8,400.6 66.8,400.6 67.8,400.8 70.8,402.0 74.3,402.4 75.3,402.2 75.8,401.8 77.3,395.5 77.8,397.1 79.3,415.2 79.8,418.9 83.3,399.3 84.8,398.7 86.8,398.5 87.8,398.6 88.3,398.4 91.3,398.7 92.3,398.2 94.8,398.4 97.3,397.9 98.3,398.1 99.3,397.8 100.8,397.7 101.8,398.2 103.8,398.7 104.3,398.6 107.3,400.0 108.3,400.1 110.8,401.0 112.3,401.3" fill="none" stroke="#161616" stroke-width="1.35" stroke-linejoin="round"/>
<polyline points="112.3,401.3 112.8,399.8 113.3,399.1 113.8,398.8 114.3,399.2 114.8,400.3 115.3,402.6 118.8,431.9 120.3,440.3 120.8,441.8 121.3,442.3 121.8,442.1 122.3,440.6 122.8,437.6 123.8,426.6 125.3,404.3 125.8,399.0 126.8,393.2 127.8,391.3 136.8,378.1 137.3,377.7 137.8,377.6 138.3,378.0 139.8,380.2 141.3,383.2 144.3,391.8 145.3,394.1 146.3,395.7 150.3,401.3 151.3,402.1 158.3,403.4 159.8,402.7" fill="none" stroke="#ff0000" stroke-width="2.3" stroke-linejoin="round" stroke-linecap="round"/>
<polyline points="159.6,403.0 160.1,402.7 162.1,402.7 164.6,402.2 165.6,402.4 166.1,402.2 166.6,402.4 167.6,402.1 172.1,402.5 172.6,402.3 173.6,402.3 174.1,402.1 175.6,402.0 176.1,402.2 178.1,401.8 179.1,401.9 180.1,402.3 181.6,402.3 183.6,402.2 184.1,402.4 186.6,402.0 187.6,402.2 188.6,401.9 189.6,401.9 190.6,401.5 191.1,401.6 192.1,401.1 193.6,400.8 194.1,400.4 196.6,400.7 198.6,401.2 199.6,401.1 200.6,401.4 203.6,401.7 204.1,401.5 205.6,395.5 206.1,396.6 206.6,400.5 207.1,408.3 208.1,418.8 211.6,399.7 212.1,399.0 214.6,398.5 216.6,398.5 217.6,398.2 221.1,398.1 223.1,397.5 224.6,397.7 226.6,397.4 228.1,397.6 229.6,398.2 230.6,398.1 233.6,398.7 235.6,399.3 239.1,401.2 240.1,401.3 240.6,400.2" fill="none" stroke="#161616" stroke-width="1.35" stroke-linejoin="round"/>
<polyline points="240.3,401.4 240.8,399.9 241.3,399.1 241.8,398.9 242.3,399.2 242.8,400.4 243.3,402.6 246.8,432.0 248.3,440.5 248.8,441.8 249.3,442.4 249.8,442.1 250.3,440.7 250.8,437.7 251.8,426.8 253.3,404.3 253.8,399.0 254.8,393.2 255.3,392.1 264.8,377.8 265.3,377.4 265.8,377.3 266.3,377.6 268.3,380.9 269.8,384.4 272.3,392.0 273.3,394.4 277.8,401.2 278.8,402.2 280.3,402.7 286.3,403.0 287.3,402.8 287.8,402.1" fill="none" stroke="#ff0000" stroke-width="2.3" stroke-linejoin="round" stroke-linecap="round"/>
<polyline points="287.6,402.7 288.1,402.1 289.6,401.7 291.1,402.0 293.1,401.8 295.6,402.0 296.1,402.2 298.6,402.3 299.6,402.6 300.1,402.5 301.6,402.7 302.6,402.4 304.6,402.4 305.6,402.1 307.1,402.0 308.1,402.3 312.6,402.2 315.6,402.5 316.6,402.3 318.1,402.4 322.1,400.5 323.6,400.4 328.6,402.1 329.6,402.2 331.1,401.8 332.1,402.0 332.6,401.9 334.1,395.4 334.6,396.6 335.1,400.5 335.6,408.3 336.6,418.7 340.1,399.5 340.6,399.0 342.6,398.4 349.1,398.4 352.1,397.6 355.1,397.4 356.1,397.5 359.1,398.5 360.6,398.5 361.6,399.1 364.1,399.8 366.6,401.1 370.6,402.2 371.1,402.0 373.1,401.9 374.1,402.1 376.6,402.0 377.6,402.2 380.1,402.0 380.6,402.1 383.6,400.8 386.6,400.3 389.6,401.8 390.6,401.9 391.6,402.3 395.1,402.3 396.6,396.5 397.1,395.6 397.6,397.9 399.1,417.3 399.6,417.1 402.6,400.6 403.1,399.0 403.6,398.8 407.6,398.5 412.6,398.5 413.6,398.2 414.1,398.3 417.1,397.8 418.1,398.0 419.6,397.7 422.1,398.1 423.6,398.9 428.6,400.9 431.5,401.2 432.0,401.5 435.5,401.9 437.0,401.7 438.5,401.9 443.0,401.6 445.5,400.8 448.0,400.6 449.0,400.7 452.0,401.9 454.5,402.0 455.0,402.2 456.5,402.4 457.0,402.1 458.5,395.8 459.0,396.9 459.5,401.1 460.5,414.7 461.0,419.0 464.5,399.4 465.0,398.7 465.5,398.5 468.5,398.6 469.5,398.4 472.0,398.9 474.5,398.2 476.0,398.1 477.5,397.7 481.5,397.8 486.0,398.5 492.0,401.1 492.5,401.0 494.5,401.6 496.0,401.5 499.0,401.8 500.5,401.8 501.5,402.0 503.0,401.9 504.0,402.2 507.0,401.3 509.0,401.0 510.0,400.6 511.0,400.6 512.5,401.4 514.5,401.6 517.5,401.6" fill="none" stroke="#161616" stroke-width="1.35" stroke-linejoin="round"/>
<polyline points="32.3,446.3 33.3,446.3 35.8,446.8 36.3,447.2 38.3,447.9 39.3,448.0 40.3,448.4 42.3,448.9 45.3,448.6 46.8,448.3 49.3,448.1 49.8,447.8 54.3,447.9 55.3,447.8 57.8,448.0 58.8,447.8 61.8,448.0 65.8,446.6 67.3,446.5 71.8,447.4 75.3,447.6 75.8,446.8 77.3,435.2 77.8,438.1 78.3,448.9 79.3,485.5 79.8,496.8 83.3,447.6 86.3,447.0 89.8,446.6 90.3,446.7 91.3,446.4 92.3,446.3 96.8,444.3 99.8,444.0 103.3,444.9 108.8,447.0 110.3,447.2 112.3,448.0" fill="none" stroke="#161616" stroke-width="1.35" stroke-linejoin="round"/>
<polyline points="112.3,448.0 112.8,446.8 114.8,445.1 115.3,445.4 115.8,447.5 116.8,456.6 120.3,504.4 121.3,513.0 121.8,513.9 122.3,510.9 122.8,505.1 125.8,452.8 126.8,442.8 127.3,440.2 127.8,438.7 136.8,425.4 137.8,424.3 138.3,424.1 138.8,424.4 139.3,425.0 141.3,428.2 142.3,430.4 145.3,439.6 146.3,442.1 147.3,443.9 149.8,447.5 151.3,448.6 154.8,450.4 157.3,451.3 158.3,451.2 158.8,450.8 159.3,450.1 159.8,448.1" fill="none" stroke="#ff0000" stroke-width="2.3" stroke-linejoin="round" stroke-linecap="round"/>
<polyline points="159.6,449.7 160.1,448.0 161.6,447.9 163.1,448.2 164.6,447.9 168.6,448.0 169.1,447.8 171.6,447.9 172.6,447.7 178.1,447.7 179.1,447.9 180.1,447.8 182.6,448.0 185.1,448.5 186.6,448.5 190.1,448.0 192.1,447.2 194.1,446.8 196.1,446.8 200.1,448.2 201.1,448.0 202.1,448.4 203.6,448.4 204.1,447.8 205.6,435.8 206.1,437.8 206.6,447.1 208.1,497.6 211.6,448.1 212.1,447.3 213.6,446.8 218.6,446.7 219.6,446.2 220.1,446.3 221.6,446.0 223.1,444.9 224.1,444.7 224.6,444.4 228.1,443.8 231.6,444.6 234.1,445.7 234.6,446.2 236.6,446.6 237.6,447.1 239.6,447.6 240.1,447.7 240.6,446.9" fill="none" stroke="#161616" stroke-width="1.35" stroke-linejoin="round"/>
<polyline points="240.3,447.8 240.8,446.7 242.8,445.0 243.3,445.3 243.8,447.4 244.8,456.6 248.3,504.4 249.3,513.0 249.8,513.9 250.3,510.9 250.8,505.0 253.8,453.0 254.8,443.1 255.8,439.0 265.3,424.6 265.8,424.1 266.3,424.0 266.8,424.1 267.3,424.7 269.8,429.0 273.8,440.9 274.8,443.0 277.8,447.5 278.8,448.4 280.3,449.1 284.3,451.0 285.8,451.3 286.3,451.3 286.8,451.0 287.3,450.3 287.8,448.4" fill="none" stroke="#ff0000" stroke-width="2.3" stroke-linejoin="round" stroke-linecap="round"/>
<polyline points="287.6,449.9 288.1,448.4 288.6,448.3 289.6,448.6 290.1,448.3 295.1,448.1 296.1,447.7 300.1,447.5 303.6,447.9 307.6,447.7 308.6,447.8 310.6,447.6 311.1,447.8 312.6,447.8 313.6,448.1 317.1,448.1 319.1,447.6 321.6,446.5 323.1,446.4 325.1,446.9 327.6,447.9 330.6,448.2 331.1,448.0 332.1,448.0 332.6,447.6 334.1,435.7 334.6,437.6 335.1,446.7 336.6,497.0 340.1,447.8 340.6,447.0 343.1,447.1 344.1,446.8 347.6,446.6 353.1,444.8 356.6,444.2 357.1,444.0 358.1,444.0 360.6,444.8 361.6,444.9 364.1,446.5 366.1,446.8 368.6,447.6 370.1,447.5 372.1,448.2 372.6,448.0 377.1,448.4 379.1,448.1 380.6,447.7 381.1,447.8 382.6,447.5 384.6,446.5 388.6,446.9 391.6,448.0 394.1,448.1 395.1,448.0 396.6,437.5 397.1,436.0 397.6,440.4 399.1,493.2 399.6,493.0 402.6,450.8 403.1,447.2 407.6,447.0 410.6,446.4 413.6,445.0 415.1,444.8 416.6,444.2 417.6,444.0 420.6,443.9 421.6,444.0 423.1,444.6 425.1,445.7 426.6,446.8 428.6,447.5 430.0,447.7 431.0,448.0 432.5,447.9 433.5,448.1 434.5,447.9 435.5,448.0 436.0,447.8 439.0,447.6 440.0,447.3 441.5,447.6 448.0,446.8 449.0,446.9 454.0,448.3 455.5,448.6 456.5,448.5 457.0,448.1 458.5,436.2 459.0,438.2 459.5,447.3 461.0,497.4 464.5,447.9 465.0,447.3 467.0,447.5 468.0,447.0 470.5,446.6 471.5,446.2 472.5,445.5 473.5,445.2 474.5,445.2 478.0,443.9 478.5,444.0 480.5,443.7 481.0,443.4 483.0,443.8 484.0,444.4 486.5,445.4 487.5,446.2 490.0,446.8 492.0,447.5 494.0,447.3 495.0,447.5 495.5,447.3 496.0,447.4 497.5,447.3 499.5,447.7 501.0,447.7 503.5,448.3 505.5,447.7 507.0,447.6 509.5,446.6 511.0,446.6 514.5,447.5 517.5,447.0" fill="none" stroke="#161616" stroke-width="1.35" stroke-linejoin="round"/>
<polyline points="32.3,492.7 33.3,493.6 35.3,496.4 38.3,499.8 40.3,500.9 42.3,501.2 43.8,500.9 46.8,499.5 47.3,499.6 47.8,499.1 49.8,498.1 51.8,497.8 53.8,497.7 56.8,498.8 60.3,498.9 65.8,497.4 66.8,497.4 70.3,498.1 71.8,498.8 73.3,499.0 74.8,498.8 75.3,499.0 75.8,498.1 77.3,485.5 77.8,488.2 78.3,499.4 79.3,538.7 79.8,550.8 83.3,498.5 84.3,498.8 86.3,498.6 90.3,497.4 94.3,494.8 97.3,491.8 98.3,491.2 99.8,490.8 100.8,490.9 102.8,492.0 103.8,493.0 108.8,497.1 110.3,498.0 112.3,498.8" fill="none" stroke="#161616" stroke-width="1.35" stroke-linejoin="round"/>
<polyline points="112.3,498.8 113.3,497.4 114.3,495.4 115.3,494.5 115.8,494.8 116.3,496.4 116.8,499.1 118.3,513.0 120.8,547.8 121.3,552.5 121.8,555.4 122.3,554.8 122.8,550.6 125.3,513.0 126.3,503.4 127.3,497.5 127.8,495.6 128.3,494.5 131.3,490.8 132.3,489.1 137.8,477.3 138.3,476.8 138.8,476.7 139.3,477.1 142.3,481.6 143.8,484.9 146.3,491.7 147.3,493.6 148.3,494.8 152.3,498.3 153.8,499.1 158.3,499.2 159.3,499.0 159.8,498.5" fill="none" stroke="#ff0000" stroke-width="2.3" stroke-linejoin="round" stroke-linecap="round"/>
<polyline points="159.6,498.9 160.1,498.4 164.1,498.5 164.6,498.3 166.1,498.6 169.6,498.5 171.1,498.8 172.1,498.8 173.1,499.1 179.1,498.6 182.6,499.0 184.6,498.9 185.6,499.1 189.6,498.9 193.1,497.7 195.1,497.4 196.6,497.6 199.1,498.3 201.1,498.6 202.6,499.0 203.6,499.0 204.1,498.7 205.6,486.5 206.1,488.5 206.6,498.2 208.1,552.2 211.6,499.5 212.1,498.8 214.6,499.1 217.6,498.2 218.6,497.7 221.6,495.5 225.1,492.4 226.6,491.4 228.6,491.0 229.6,491.2 231.1,492.0 235.1,495.3 238.1,497.4 240.6,498.0" fill="none" stroke="#161616" stroke-width="1.35" stroke-linejoin="round"/>
<polyline points="240.3,498.1 240.8,497.8 242.3,495.4 243.3,494.5 243.8,494.8 244.3,496.4 244.8,499.1 246.3,513.0 248.8,547.7 249.3,552.4 249.8,555.3 250.3,554.7 250.8,550.5 253.3,513.0 254.3,503.2 255.3,497.2 255.8,495.5 256.3,494.4 259.3,490.8 260.8,488.2 265.8,477.3 266.3,476.9 266.8,476.8 267.3,477.1 270.3,481.4 271.8,484.6 274.8,492.7 275.8,494.3 277.3,495.8 279.3,497.6 281.8,499.1 286.3,499.3 287.3,499.1 287.8,498.8" fill="none" stroke="#ff0000" stroke-width="2.3" stroke-linejoin="round" stroke-linecap="round"/>
<polyline points="287.6,499.1 289.1,498.7 291.1,498.6 296.6,498.8 299.6,498.6 301.1,498.9 307.1,498.5 309.1,498.9 310.6,498.9 312.6,499.1 314.6,498.7 316.6,498.7 317.1,498.5 318.1,498.5 323.6,497.5 324.6,497.5 327.6,498.2 328.1,498.1 331.1,498.7 332.1,498.7 332.6,498.3 334.1,486.0 334.6,488.0 335.1,497.8 336.6,552.1 340.1,499.8 340.6,499.1 343.1,499.2 347.1,497.7 351.6,494.2 354.1,491.7 355.6,491.1 357.6,490.9 359.1,491.5 360.6,492.7 365.1,496.7 367.6,498.0 368.6,498.1 370.1,498.9 373.1,499.2 373.6,499.0 375.1,499.0 376.1,498.6 379.6,498.6 381.1,498.3 385.6,496.8 387.1,497.0 389.6,497.8 394.6,498.4 395.1,498.6 396.6,487.7 397.1,486.4 397.6,491.2 399.1,548.0 399.6,547.9 402.6,502.9 403.1,499.1 403.6,498.9 407.1,498.6 411.1,496.8 414.1,494.4 417.6,491.0 419.6,490.4 421.1,490.7 422.6,491.8 424.1,493.6 428.1,497.3 429.1,497.7 430.5,497.9 431.5,498.4 433.0,498.4 435.5,499.0 436.0,498.8 436.5,499.1 438.0,498.9 439.0,499.1 441.0,498.5 444.0,498.2 446.0,497.4 448.5,497.1 449.5,497.2 452.0,498.2 456.0,499.0 457.0,498.5 458.5,486.0 459.0,488.1 459.5,498.0 461.0,552.1 464.5,499.7 465.0,499.1 465.5,498.9 466.5,499.0 468.0,498.9 469.5,498.4 471.5,497.4 473.5,495.9 474.0,495.7 477.0,493.1 479.0,491.6 481.0,490.7 481.5,490.6 484.0,491.6 485.5,492.8 487.5,494.8 490.5,496.9 494.5,498.2 496.0,498.2 497.5,498.5 501.5,498.3 504.5,498.4 507.5,497.3 509.5,496.8 511.0,497.0 514.0,498.2 517.5,497.4" fill="none" stroke="#161616" stroke-width="1.35" stroke-linejoin="round"/>
<polyline points="32.3,542.3 33.3,543.4 35.8,547.0 36.8,548.1 39.8,550.6 41.3,551.2 43.3,551.0 47.3,549.2 49.8,548.7 50.8,548.8 51.8,548.7 53.3,548.9 54.3,548.7 56.8,548.8 62.3,549.5 63.3,549.3 66.3,547.9 67.8,547.9 68.8,548.1 71.3,549.0 73.3,549.2 75.3,549.0 75.8,546.7 77.3,511.3 77.8,519.5 78.8,562.7 79.3,577.1 79.8,585.6 83.3,549.8 85.3,550.2 86.3,550.1 87.8,549.9 89.3,549.2 92.3,547.6 97.3,542.8 98.3,542.3 98.8,541.9 100.3,541.7 101.3,541.9 102.8,542.8 103.3,543.4 104.3,544.1 105.8,545.5 107.8,547.7 108.8,548.4 110.3,548.9 112.3,549.1" fill="none" stroke="#161616" stroke-width="1.35" stroke-linejoin="round"/>
<polyline points="112.3,549.1 112.8,547.1 115.8,542.8 117.3,538.7 117.8,538.1 118.3,538.7 118.8,540.4 120.8,555.3 121.3,557.8 121.8,559.0 122.3,558.9 122.8,558.1 125.3,553.0 126.3,552.0 128.3,550.9 134.3,549.3 142.3,548.1 145.8,548.2 151.3,548.1 154.8,548.3 158.3,548.0 159.3,548.3 159.8,548.7" fill="none" stroke="#ff0000" stroke-width="2.3" stroke-linejoin="round" stroke-linecap="round"/>
<polyline points="159.6,548.4 160.1,548.6 164.1,548.6 166.1,549.0 168.1,548.9 169.1,549.1 170.6,549.2 172.1,549.0 173.1,549.3 174.1,549.2 174.6,549.4 176.6,548.9 177.1,549.1 181.1,548.6 187.1,548.8 188.1,549.1 190.6,548.7 194.6,547.3 196.1,547.6 198.6,548.6 200.1,548.9 203.6,549.0 204.1,547.8 205.6,512.6 206.1,518.4 207.1,560.4 208.1,586.3 211.6,550.0 212.1,549.6 214.6,550.0 218.6,548.8 221.1,547.2 226.1,542.7 227.6,542.2 228.6,542.1 230.1,542.6 232.1,544.3 233.6,545.2 235.6,546.9 236.6,547.5 238.6,548.1 240.1,548.8 240.6,547.5" fill="none" stroke="#161616" stroke-width="1.35" stroke-linejoin="round"/>
<polyline points="240.3,548.9 240.8,547.1 243.3,544.0 243.8,543.0 245.3,538.8 245.8,538.2 246.3,538.7 246.8,540.3 248.8,555.3 249.3,557.7 249.8,558.9 250.3,558.9 250.8,558.0 253.3,553.0 253.8,552.3 255.3,551.2 259.8,550.3 263.3,549.2 271.3,547.9 280.8,548.5 286.8,548.1 287.3,548.2 287.8,548.7" fill="none" stroke="#ff0000" stroke-width="2.3" stroke-linejoin="round" stroke-linecap="round"/>
<polyline points="287.6,548.3 288.1,548.7 289.6,548.5 291.6,549.1 292.6,548.9 294.1,549.1 298.6,549.3 302.1,549.3 303.1,549.0 305.6,548.9 306.6,548.7 309.1,549.1 316.1,548.8 316.6,549.1 317.1,548.8 318.6,548.9 321.6,547.9 323.1,547.6 323.6,547.8 326.1,548.1 326.6,548.5 328.1,549.0 330.6,549.2 332.1,549.1 332.6,547.9 334.1,512.2 334.6,517.9 335.6,559.9 336.6,586.1 340.1,550.4 340.6,550.1 344.1,550.0 345.6,549.3 347.1,548.9 351.1,545.7 353.1,543.6 355.6,542.1 357.1,541.7 358.1,541.8 359.1,542.5 361.1,544.2 365.1,547.2 368.1,548.4 370.6,549.1 373.6,548.7 375.1,548.7 375.6,548.8 377.1,548.7 380.6,549.2 383.1,548.7 385.6,547.9 390.1,548.4 392.1,549.0 393.1,548.8 394.6,548.9 395.1,548.8 395.6,540.8 396.6,517.2 397.1,512.9 397.6,526.2 398.6,571.4 399.1,583.4 399.6,583.3 402.6,552.3 403.1,549.9 404.1,550.1 408.1,549.7 411.1,548.4 417.1,542.8 418.1,542.2 419.6,541.8 421.1,542.0 423.1,543.0 426.1,546.3 429.1,548.6 430.5,549.1 432.0,549.2 438.5,548.8 440.0,549.2 441.5,549.3 443.0,549.1 444.0,548.7 444.5,548.7 447.5,547.8 450.0,548.3 451.0,548.4 451.5,548.6 452.5,548.6 456.5,549.1 457.0,548.0 458.5,512.6 459.0,518.3 460.0,560.2 461.0,586.0 464.5,550.0 465.0,549.6 467.5,550.1 471.5,549.2 473.0,548.5 477.0,544.6 477.5,543.9 479.0,542.7 480.5,542.2 481.5,542.2 483.0,542.4 485.0,544.1 487.0,545.2 489.5,547.3 493.5,548.9 498.5,548.8 500.0,548.6 501.5,548.9 502.5,548.8 504.0,548.9 505.0,548.5 506.0,548.5 510.0,547.6 513.0,548.3 517.5,549.8" fill="none" stroke="#161616" stroke-width="1.35" stroke-linejoin="round"/>
<polyline points="32.3,596.6 32.8,596.6 35.3,597.2 38.3,599.3 40.3,600.1 43.8,599.8 46.8,598.7 51.3,598.0 59.3,598.6 60.3,598.4 62.3,598.4 64.8,597.6 65.8,597.5 66.8,597.7 68.3,597.6 70.8,598.6 71.8,598.5 73.3,598.8 75.3,598.6 75.8,596.4 77.3,567.3 77.8,574.2 78.8,603.7 79.3,611.1 79.8,614.9 83.3,600.0 85.8,600.1 88.3,599.8 93.8,597.5 97.8,595.0 99.8,594.5 100.3,594.5 102.3,595.2 105.3,596.7 108.8,597.6 110.8,598.3 112.3,598.5" fill="none" stroke="#161616" stroke-width="1.35" stroke-linejoin="round"/>
<polyline points="112.3,598.5 112.8,595.7 115.3,591.9 115.8,590.8 119.8,579.2 120.3,578.5 121.3,577.9 121.8,578.2 122.8,580.2 123.8,584.5 125.8,594.9 126.8,598.6 127.8,600.9 128.8,602.2 130.8,603.8 136.8,607.8 137.8,608.1 138.3,608.0 141.3,606.9 142.3,606.0 148.3,598.9 149.8,597.7 152.3,597.2 154.8,597.1 158.3,597.4 159.3,597.8 159.8,598.9" fill="none" stroke="#ff0000" stroke-width="2.3" stroke-linejoin="round" stroke-linecap="round"/>
<polyline points="159.6,598.0 160.1,599.0 161.1,599.3 161.6,599.1 162.6,599.2 163.1,598.9 163.6,599.1 164.1,598.9 165.6,599.0 167.1,598.6 170.6,598.8 172.6,598.5 174.6,598.6 175.1,598.4 177.6,598.4 178.6,598.7 180.6,598.7 182.1,598.9 185.1,598.4 188.1,598.3 189.6,598.5 191.1,598.4 192.6,597.8 195.6,597.4 197.6,597.8 199.1,598.5 201.1,598.7 201.6,599.1 203.6,598.7 204.1,597.6 205.6,568.6 206.1,573.2 207.1,602.1 207.6,610.7 208.1,615.3 211.6,600.2 212.1,600.1 213.1,600.3 214.1,600.1 220.1,598.6 222.6,597.4 224.6,595.9 227.1,594.5 230.1,595.0 230.6,595.4 231.1,595.5 234.1,597.2 235.1,597.3 238.6,598.6 240.1,598.8 240.6,596.4" fill="none" stroke="#161616" stroke-width="1.35" stroke-linejoin="round"/>
<polyline points="240.3,598.8 240.8,596.0 243.8,591.2 247.8,580.4 248.3,579.8 249.3,579.4 249.8,579.7 250.8,581.4 251.8,585.3 253.8,595.0 254.8,598.4 255.8,600.5 256.8,601.7 260.3,604.3 264.8,607.1 266.3,607.2 268.3,606.5 270.3,605.6 272.3,603.5 276.3,598.6 277.3,597.7 277.8,597.4 278.3,597.3 286.3,597.3 287.3,597.7 287.8,598.4" fill="none" stroke="#ff0000" stroke-width="2.3" stroke-linejoin="round" stroke-linecap="round"/>
<polyline points="287.6,597.8 288.1,598.5 291.6,598.2 292.1,598.4 293.1,598.3 294.1,598.6 297.1,598.9 303.6,598.4 307.1,598.7 307.6,598.4 309.6,598.7 312.6,598.4 314.6,598.8 315.1,598.7 319.1,598.6 320.6,597.9 321.6,597.9 322.1,597.7 323.1,597.6 325.6,597.8 327.1,598.2 329.6,598.3 331.1,598.6 332.1,598.5 332.6,597.6 334.1,568.5 334.6,573.3 335.6,602.1 336.1,610.8 336.6,615.2 340.1,600.2 341.1,600.1 342.6,600.6 346.6,599.9 350.6,598.0 353.6,595.8 356.1,594.8 357.6,594.6 358.6,595.0 361.1,595.7 363.6,597.1 364.6,597.3 366.1,598.1 368.6,598.5 369.6,598.5 370.1,598.7 372.6,598.3 375.6,598.8 376.1,598.6 378.6,599.1 383.1,598.2 384.1,597.7 386.6,597.5 387.6,597.5 391.1,598.2 393.6,598.3 394.1,598.6 395.1,598.5 396.6,572.6 397.1,569.0 398.6,609.1 399.1,614.6 399.6,614.4 402.6,601.0 403.1,600.0 404.6,600.1 405.6,599.7 406.1,599.9 407.1,599.9 411.1,599.0 413.6,597.6 414.1,597.1 417.6,594.9 419.1,594.7 420.1,594.8 422.1,595.5 423.1,596.1 424.1,596.4 426.1,597.4 431.5,598.5 433.0,598.4 434.5,598.7 439.0,598.4 439.5,598.7 441.0,598.5 442.5,598.6 444.0,598.5 446.5,597.6 449.5,597.8 451.0,598.4 452.5,598.7 456.5,598.5 457.0,597.8 458.5,568.6 459.0,573.4 460.0,602.4 460.5,611.0 461.0,615.5 464.5,600.3 466.0,599.9 468.0,600.2 469.5,599.6 471.5,599.5 476.0,597.2 477.5,596.1 479.0,595.5 480.5,594.5 481.5,594.5 483.0,594.7 484.5,595.4 486.5,596.8 489.0,597.9 491.0,598.0 493.5,598.5 495.5,598.3 497.5,598.5 498.5,598.2 500.0,598.2 504.5,598.6 508.5,597.7 509.0,597.4 511.0,597.3 512.0,597.5 513.0,598.1 514.5,598.3 517.5,599.6" fill="none" stroke="#161616" stroke-width="1.35" stroke-linejoin="round"/>
<text x="77.6" y="16.3" font-family="Liberation Sans" font-weight="bold" font-size="10.6" fill="#000" text-anchor="middle">N</text><rect x="76.5" y="18.8" width="3" height="8.3" fill="#000"/>
<text x="120.8" y="16.3" font-family="Liberation Sans" font-weight="bold" font-size="10.6" fill="#ff0000" text-anchor="middle">V</text><rect x="119.7" y="18.8" width="3" height="8.3" fill="#ff0000"/>
<text x="206.0" y="16.3" font-family="Liberation Sans" font-weight="bold" font-size="10.6" fill="#000" text-anchor="middle">N</text><rect x="204.9" y="18.8" width="3" height="8.3" fill="#000"/>
<text x="249.0" y="16.3" font-family="Liberation Sans" font-weight="bold" font-size="10.6" fill="#ff0000" text-anchor="middle">V</text><rect x="247.9" y="18.8" width="3" height="8.3" fill="#ff0000"/>
<text x="397.5" y="16.3" font-family="Liberation Sans" font-weight="bold" font-size="10.6" fill="#000" text-anchor="middle">N</text><rect x="396.4" y="18.8" width="3" height="8.3" fill="#000"/>
<text x="459.3" y="16.3" font-family="Liberation Sans" font-weight="bold" font-size="10.6" fill="#000" text-anchor="middle">N</text><rect x="458.2" y="18.8" width="3" height="8.3" fill="#000"/>
<rect x="60.0" y="0" width="18.30000000000001" height="632" fill="rgba(98,94,235,0.49)"/>
<rect x="249.39999999999998" y="0" width="23.200000000000045" height="632" fill="rgba(98,94,235,0.49)"/>
<rect x="78.30000000000001" y="0" width="171.09999999999997" height="632" fill="rgba(94,20,216,0.49)"/>
<rect x="58.599999999999994" y="0" width="1.7" height="632" fill="#0a0af0"/>
<rect x="272.1" y="0" width="1.7" height="632" fill="#0a0af0"/>
<path d="M267.0 0H274.0V5Z" fill="#0a5a5a"/>
<path d="M9.5 341.3H11.799999999999997V311.0H20.400000000000006V341.3H22.599999999999994" fill="none" stroke="#f01010" stroke-width="1.5"/>
</svg>
<div class="t" style="left:95.40px;top:119.26px;font-size:10.8px;color:#1414f0;font-weight:bold;">I</div>
<div class="t" style="left:93.50px;top:168.06px;font-size:10.8px;color:#1414f0;font-weight:bold;">II</div>
<div class="t" style="left:92.20px;top:217.86px;font-size:10.8px;color:#1414f0;font-weight:bold;">III</div>
<div class="t" style="left:88.00px;top:266.96px;font-size:10.8px;color:#1414f0;font-weight:bold;">aVR</div>
<div class="t" style="left:87.70px;top:316.26px;font-size:10.8px;color:#1414f0;font-weight:bold;">aVL</div>
<div class="t" style="left:87.70px;top:365.46px;font-size:10.8px;color:#1414f0;font-weight:bold;">aVF</div>
<div class="t" style="left:91.50px;top:414.16px;font-size:10.8px;color:#1414f0;font-weight:bold;">V1</div>
<div class="t" style="left:91.50px;top:463.76px;font-size:10.8px;color:#1414f0;font-weight:bold;">V2</div>
<div class="t" style="left:91.50px;top:513.06px;font-size:10.8px;color:#1414f0;font-weight:bold;">V3</div>
<div class="t" style="left:91.50px;top:562.16px;font-size:10.8px;color:#1414f0;font-weight:bold;">V4</div>
<div class="t" style="left:91.50px;top:611.76px;font-size:10.8px;color:#1414f0;font-weight:bold;">V5</div>
<div class="t" style="left:91.50px;top:661.06px;font-size:10.8px;color:#1414f0;font-weight:bold;">V6</div>
<div class="a" style="left:356.8px;top:74.2px;width:85.69999999999999px;height:12.4px;background:#000"></div><div class="t" style="left:358.90px;top:74.89px;font-size:11px;color:#fff;font-weight:bold;transform-origin:0 0;transform:scaleX(0.9206);">Total: 0:03:00.90</div>
<div class="a" style="left:356.8px;top:86.6px;width:140.7px;height:12px;background:#0a0af5"></div><div class="t" style="left:358.90px;top:87.29px;font-size:11px;color:#fff;font-weight:bold;transform-origin:0 0;transform:scaleX(0.9748);">Selected interval: 2730 ms</div>
<div class="a" style="left:356.8px;top:98.5px;width:235.2px;height:12px;background:#9c38d0"></div><div class="t" style="left:358.90px;top:99.19px;font-size:11px;color:#fff;font-weight:bold;transform-origin:0 0;transform:scaleX(0.9744);">Selected RR intervals(3): 2179ms 83bpm</div>
<div class="a" style="left:356.8px;top:110.4px;width:58.19999999999999px;height:12.2px;background:#000"></div><div class="t" style="left:358.90px;top:111.09px;font-size:11px;color:#fff;font-weight:bold;transform-origin:0 0;transform:scaleX(0.9442);">I: 0,16 mm</div>
<div class="a" style="left:356.8px;top:159.4px;width:62.19999999999999px;height:12.2px;background:#000"></div><div class="t" style="left:358.90px;top:160.09px;font-size:11px;color:#fff;font-weight:bold;transform-origin:0 0;transform:scaleX(0.9638);">II: 0,10 mm</div>
<div class="a" style="left:356.8px;top:209.2px;width:71.19999999999999px;height:12.2px;background:#000"></div><div class="t" style="left:358.90px;top:209.89px;font-size:11px;color:#fff;font-weight:bold;">III: -0,06 mm</div>
<div class="a" style="left:356.8px;top:258px;width:78.19999999999999px;height:12.2px;background:#000"></div><div class="t" style="left:358.90px;top:258.69px;font-size:11px;color:#fff;font-weight:bold;transform-origin:0 0;transform:scaleX(0.9340);">aVR: -0,13 mm</div>
<div class="a" style="left:356.8px;top:307.4px;width:73.19999999999999px;height:12.2px;background:#000"></div><div class="t" style="left:358.90px;top:308.09px;font-size:11px;color:#fff;font-weight:bold;transform-origin:0 0;transform:scaleX(0.9358);">aVL: 0,11 mm</div>
<div class="a" style="left:356.8px;top:356.4px;width:73.19999999999999px;height:12.2px;background:#000"></div><div class="t" style="left:358.90px;top:357.09px;font-size:11px;color:#fff;font-weight:bold;transform-origin:0 0;transform:scaleX(0.9278);">aVF: 0,02 mm</div>
<div class="a" style="left:356.8px;top:405.4px;width:66.69999999999999px;height:12.2px;background:#000"></div><div class="t" style="left:358.90px;top:406.09px;font-size:11px;color:#fff;font-weight:bold;transform-origin:0 0;transform:scaleX(0.9237);">V1: 0,91 mm</div>
<div class="a" style="left:356.8px;top:455.4px;width:66.69999999999999px;height:12.2px;background:#000"></div><div class="t" style="left:358.90px;top:456.09px;font-size:11px;color:#fff;font-weight:bold;transform-origin:0 0;transform:scaleX(0.9237);">V2: 1,10 mm</div>
<div class="a" style="left:356.8px;top:504.6px;width:66.69999999999999px;height:12.2px;background:#000"></div><div class="t" style="left:358.90px;top:505.29px;font-size:11px;color:#fff;font-weight:bold;transform-origin:0 0;transform:scaleX(0.9237);">V3: 1,83 mm</div>
<div class="a" style="left:356.8px;top:554.2px;width:67.59999999999997px;height:12.2px;background:#000"></div><div class="t" style="left:358.90px;top:554.89px;font-size:11px;color:#fff;font-weight:bold;transform-origin:0 0;transform:scaleX(0.9377);">V4: 1,57 mm</div>
<div class="a" style="left:356.8px;top:603.4px;width:67.59999999999997px;height:12.2px;background:#000"></div><div class="t" style="left:358.90px;top:604.09px;font-size:11px;color:#fff;font-weight:bold;transform-origin:0 0;transform:scaleX(0.9377);">V5: 0,13 mm</div>
<div class="a" style="left:356.8px;top:652.4px;width:71.19999999999999px;height:12.2px;background:#000"></div><div class="t" style="left:358.90px;top:653.09px;font-size:11px;color:#fff;font-weight:bold;transform-origin:0 0;transform:scaleX(0.9402);">V6: -0,59 mm</div>
<div class="a" style="left:82px;top:703px;width:518px;height:16px;background:#e9e9e9"></div>
<div class="a" style="left:84px;top:704px;width:17px;height:15px;background:linear-gradient(#f4f4f4,#d8d8d8);border:1px solid #8a8a8a;border-radius:2px"></div>
<svg class="a" style="left:88px;top:707px" width="8" height="9"><path d="M6.5 0.5V8.5L1 4.5Z" fill="#111"/></svg>
<svg class="a" style="left:103px;top:708px" width="5" height="7"><path d="M4 0.5V6.5L0.5 3.5Z" fill="#444"/></svg>
<div class="a" style="left:184.5px;top:704px;width:11.5px;height:15px;background:linear-gradient(90deg,#f6f6f6,#dcdcdc);border:1px solid #8c8c8c;border-radius:2px"></div>
<svg class="a" style="left:558px;top:708px" width="5" height="7"><path d="M1 0.5V6.5L4.5 3.5Z" fill="#444"/></svg>
<div class="a" style="left:567px;top:704px;width:33px;height:15px;background:linear-gradient(#f6f6f6,#d6d6d6);border:1px solid #8a8a8a;border-radius:2px"></div>
<svg class="a" style="left:577px;top:707px" width="14" height="9"><path d="M1 0.5V8.5L6.5 4.5ZM7 0.5V8.5L12.5 4.5Z" fill="#000"/></svg>
<div class="a" style="left:600px;top:71px;width:4px;height:648px;background:#17b4c4"></div>
<div class="a" style="left:604px;top:71px;width:396px;height:648px;background:#eef2fb"></div>
<div class="a" style="left:604px;top:72px;width:396px;height:25px;background:linear-gradient(#f7f9fe,#e9eefa)"></div>
<div class="gb gbg" style="left:634px;width:29px"></div>
<div class="gb gbg" style="left:665px;width:29px">INF</div>
<div class="gb gbg" style="left:696px;width:28.5px">HR</div>
<div class="gb gbk" style="left:726px;width:29px">ST</div>
<div class="gb gbg" style="left:757px;width:29px">STL</div>
<div class="gb gbk" style="left:788px;width:29px">COL</div>
<div class="gb gbk" style="left:818.5px;width:29.0px">AVG</div>
<div class="gb gbk" style="left:849px;width:29px">SPO</div>
<div class="gb gbd" style="left:880px;width:28.5px">LOFF</div>
<div class="gb gbd" style="left:910px;width:29px">MS</div>
<div class="gb gbg" style="left:941px;width:29px">EVN</div>
<svg class="a" style="left:642.5px;top:82px" width="13" height="8"><path d="M0.5 0.5H12.5L6.5 7.5Z" fill="#000"/></svg>
<div class="a" style="left:604px;top:97px;width:272px;height:592px;background:#4682b4"></div>
<div class="a" style="left:606px;top:98.5px;width:267.5px;height:192.5px;background:#fff"></div>
<div class="a" style="left:606px;top:98.5px;width:267.5px;height:18.5px;background:linear-gradient(#fafbfd,#eceff5)"></div>
<svg class="a" style="left:608px;top:101px" width="3" height="14"><g fill="#9aa0aa"><rect x="1" y="1" width="1" height="1"/><rect x="1" y="4" width="1" height="1"/><rect x="1" y="7" width="1" height="1"/><rect x="1" y="10" width="1" height="1"/></g></svg>
<div class="sb" style="left:613.4px;width:21.200000000000045px"></div>
<div class="sb" style="left:633.6px;width:28.799999999999955px"></div>
<div class="sb" style="left:661.4px;width:26.600000000000023px"></div>
<div class="sb" style="left:687px;width:44px"></div>
<div class="sb" style="left:756px;width:56px"></div>
<div class="t" style="left:618.50px;top:103.26px;font-size:9.5px;color:#000;transform-origin:0 0;transform:scaleX(0.8017);">HR</div>
<div class="t" style="left:638.50px;top:103.26px;font-size:9.5px;color:#000;transform-origin:0 0;transform:scaleX(0.8755);">Load</div>
<div class="t" style="left:666.00px;top:103.26px;font-size:9.5px;color:#000;transform-origin:0 0;transform:scaleX(0.8727);">MET</div>
<div class="t" style="left:692.00px;top:103.26px;font-size:9.5px;color:#000;transform-origin:0 0;transform:scaleX(0.8739);">BP [2/12]</div>
<div class="t" style="left:734.00px;top:103.26px;font-size:9.5px;color:#8c8c8c;transform-origin:0 0;transform:scaleX(0.8015);">BPm</div>
<div class="t" style="left:760.00px;top:103.26px;font-size:9.5px;color:#000;transform-origin:0 0;transform:scaleX(0.9785);">Marked 0/0</div>
<svg class="a" style="left:606px;top:117px" width="268" height="174" viewBox="606 117 268 174"><path d="M640.07 138.8V271.0" stroke="#ffc0c8" stroke-width="1"/><path d="M651.34 138.8V271.0" stroke="#ffc0c8" stroke-width="1"/><path d="M662.61 138.8V271.0" stroke="#ffc0c8" stroke-width="1"/><path d="M673.88 138.8V271.0" stroke="#ffc0c8" stroke-width="1"/><path d="M685.15 138.8V271.0" stroke="#ffc0c8" stroke-width="1"/><path d="M696.42 138.8V271.0" stroke="#ffc0c8" stroke-width="1"/><path d="M707.69 138.8V271.0" stroke="#ffc0c8" stroke-width="1"/><path d="M718.96 138.8V271.0" stroke="#ffc0c8" stroke-width="1"/><path d="M730.23 138.8V271.0" stroke="#ffc0c8" stroke-width="1"/><path d="M741.50 138.8V271.0" stroke="#ffc0c8" stroke-width="1"/><path d="M752.77 138.8V271.0" stroke="#ffc0c8" stroke-width="1"/><path d="M764.04 138.8V271.0" stroke="#ffc0c8" stroke-width="1"/><path d="M775.31 138.8V271.0" stroke="#ffc0c8" stroke-width="1"/><path d="M786.58 138.8V271.0" stroke="#ffc0c8" stroke-width="1"/><path d="M797.85 138.8V271.0" stroke="#ffc0c8" stroke-width="1"/><path d="M809.12 138.8V271.0" stroke="#ffc0c8" stroke-width="1"/><path d="M820.39 138.8V271.0" stroke="#ffc0c8" stroke-width="1"/><path d="M628.8 249.10H831.7" stroke="#ffc0c8" stroke-width="1"/><path d="M628.8 227.20H831.7" stroke="#ffc0c8" stroke-width="1"/><path d="M628.8 205.30H831.7" stroke="#ffc0c8" stroke-width="1"/><path d="M628.8 183.40H831.7" stroke="#ffc0c8" stroke-width="1"/><path d="M628.8 161.50H831.7" stroke="#ffc0c8" stroke-width="1"/><path d="M628.8 265.7L638.9 265.7L638.9 259.2L662.6 259.2L662.6 252.2L685.1 252.2L685.1 245.2L707.7 245.2L707.7 238.2L730.2 238.2L730.2 231.1L752.8 231.1L752.8 225.2L773.6 225.2L773.6 259.2L785.5 259.2L785.5 265.7L829.4 265.7" fill="none" stroke="#e82020" stroke-width="0.9"/><path d="M638.9 259.2V256.6H662.6V259.2M662.6 252.2V249.6H685.1V252.2M685.1 245.2V242.6H707.7V245.2M707.7 238.2V235.6H730.2V238.2M730.2 231.1V228.5H752.8V231.1M752.8 225.2V222.6H773.6V225.2M773.6 259.2V256.6H785.5V259.2" fill="none" stroke="#f46a6a" stroke-width="0.8"/><path d="M628.8 234.2H831.7" stroke="#f01818" stroke-width="1.3"/><polyline points="628.8,243.2 629.9,243.3 631.1,241.7 632.2,242.7 633.3,242.3 634.4,241.3 635.6,242.3 636.7,242.0 637.8,241.4 638.9,241.5 640.1,241.7 641.2,241.0 642.3,240.9 643.5,240.3 644.6,241.2 645.7,240.5 646.8,239.4 648.0,238.9 649.1,240.3 650.2,239.1 651.3,239.7 652.5,239.4 653.6,239.2 654.7,238.8 655.8,238.0 657.0,237.9 658.1,238.0 659.2,238.0 660.4,237.7 661.5,237.5 662.6,236.9 663.7,237.5 664.9,237.1 666.0,237.1 667.1,236.9 668.2,236.7 669.4,236.7 670.5,236.0 671.6,236.6 672.8,235.7 673.9,236.5 675.0,236.5 676.1,236.2 677.3,236.0 678.4,235.9 679.5,235.3 680.6,235.3 681.8,235.5 682.9,235.9 684.0,235.7 685.1,234.8 686.3,235.3 687.4,236.0 688.5,235.6 689.7,235.4 690.8,234.5 691.9,235.0 693.0,233.8 694.2,234.5 695.3,234.7 696.4,234.9 697.5,234.0 698.7,234.3 699.8,234.4 700.9,233.5 702.1,233.5 703.2,232.8 704.3,233.1 705.4,234.3 706.6,232.3 707.7,233.4 708.8,231.4 709.9,231.0 711.1,231.7 712.2,231.8 713.3,231.6 714.5,230.2 715.6,230.4 716.7,230.3 717.8,229.8 719.0,228.4 720.1,228.9 721.2,228.4 722.3,228.1 723.5,227.7 724.6,227.3 725.7,227.9 726.8,227.3 728.0,227.3 729.1,227.0 730.2,225.8 731.4,226.3 732.5,225.9 733.6,226.0 734.7,225.7 735.9,224.8 737.0,225.2 738.1,225.0 739.2,224.3 740.4,224.1 741.5,223.8 742.6,223.8 743.8,224.5 744.9,223.2 746.0,223.0 747.1,222.5 748.3,223.2 749.4,221.4 750.5,223.0 751.6,221.8 752.8,221.9 753.9,222.0 755.0,221.1 756.2,221.4 757.3,222.2 758.4,221.4 759.5,220.4 760.7,219.3 761.8,220.9 762.9,220.0 764.0,219.1 765.2,219.2 766.3,219.5 767.4,219.8 768.5,219.7 769.7,219.0 770.8,218.6 771.9,219.3 773.1,218.8 774.2,217.6 775.3,217.8 776.4,218.3 777.6,218.5 778.7,219.0 779.8,218.5 780.9,218.5 782.1,219.1 783.2,220.5 784.3,221.2 785.5,221.6 786.6,222.3 787.7,223.2 788.8,224.0 790.0,225.7 791.1,226.9 792.2,226.5 793.3,227.7 794.5,228.5 795.6,229.6 796.7,230.6 797.8,230.0 799.0,230.7 800.1,231.6 801.2,231.1 802.4,231.4 803.5,231.5 804.6,230.9 805.7,232.2 806.9,233.0 808.0,232.5 809.1,233.1 810.2,232.7 811.4,233.1 812.5,233.2 813.6,233.8 814.8,233.6 815.9,234.1 817.0,233.8 818.1,234.3 819.3,234.8 820.4,234.1 821.5,234.8 822.6,233.9 823.8,234.5 824.9,234.6 826.0,234.9 827.2,235.1 828.3,236.3 829.4,234.7 830.5,235.8 831.7,235.1" fill="none" stroke="#ff20e8" stroke-width="2"/><path d="M628.8 138.8V271.0H831.7" fill="none" stroke="#2020f0" stroke-width="1.2"/><path d="M662.6 138.8V271.0" stroke="#4848f0" stroke-width="1.1"/><path d="M628.8 270.4 L640.1 270.4 L640.1 259.4 L662.6 259.4 L662.6 248.5 L685.1 248.5 L685.1 237.6 L707.7 237.6 L707.7 226.6 L730.2 226.6 L730.2 215.7 L752.8 215.7 L752.8 204.7 L773.6 204.7 L773.6 259.4 L785.5 259.4 L785.5 270.4 L829.4 270.4" fill="none" stroke="#0a6a0a" stroke-width="2.2" stroke-linejoin="miter"/><path d="M639.4 214.6V238.0" stroke="#f40000" stroke-width="2.2"/><path d="M656.0 213.4V242.8" stroke="#f40000" stroke-width="2.2"/><path d="M673.0 204.4V245.4" stroke="#f40000" stroke-width="2.2"/><path d="M691.2 204.4V242.8" stroke="#f40000" stroke-width="2.2"/><path d="M708.2 205.0V233.2" stroke="#f40000" stroke-width="2.2"/><path d="M727.0 191.0V244.4" stroke="#f40000" stroke-width="2.2"/><path d="M744.6 183.6V243.8" stroke="#f40000" stroke-width="2.2"/><path d="M762.2 177.8V237.0" stroke="#f40000" stroke-width="2.2"/><path d="M777.9 177.8V233.2" stroke="#f40000" stroke-width="2.2"/><path d="M795.8 201.2V236.4" stroke="#f40000" stroke-width="2.2"/><path d="M809.0 206.6V238.6" stroke="#f40000" stroke-width="2.2"/><path d="M827.2 213.4V239.6" stroke="#f40000" stroke-width="2.2"/><rect x="628.5" y="242.0" width="2.8" height="2.8" fill="#20e020"/><rect x="651.0" y="237.8" width="2.8" height="2.8" fill="#20e020"/><rect x="673.6" y="235.0" width="2.8" height="2.8" fill="#20e020"/><rect x="696.1" y="233.2" width="2.8" height="2.8" fill="#20e020"/><rect x="718.7" y="228.0" width="2.8" height="2.8" fill="#20e020"/><rect x="741.2" y="222.7" width="2.8" height="2.8" fill="#20e020"/><rect x="763.7" y="218.4" width="2.8" height="2.8" fill="#20e020"/><rect x="786.3" y="221.7" width="2.8" height="2.8" fill="#20e020"/><rect x="808.8" y="231.3" width="2.8" height="2.8" fill="#20e020"/><rect x="848.3" y="139" width="10.8" height="67.5" fill="#ffb8cc"/><rect x="848.3" y="206.5" width="10.8" height="32" fill="#00e800"/><rect x="848.3" y="238.5" width="10.8" height="32.5" fill="#007800"/><rect x="848.3" y="139" width="10.8" height="132" fill="none" stroke="#2828e8" stroke-width="1"/></svg>
<div class="t" style="left:611.49px;top:156.98px;font-size:9px;color:#111;">250</div>
<div class="t" style="left:611.49px;top:178.88px;font-size:9px;color:#111;">200</div>
<div class="t" style="left:611.49px;top:200.78px;font-size:9px;color:#111;">150</div>
<div class="t" style="left:611.49px;top:222.68px;font-size:9px;color:#111;">100</div>
<div class="t" style="left:616.49px;top:244.58px;font-size:9px;color:#111;">50</div>
<div class="t" style="left:833.50px;top:156.98px;font-size:9px;color:#111;">20</div>
<div class="t" style="left:833.50px;top:178.88px;font-size:9px;color:#111;">16</div>
<div class="t" style="left:833.50px;top:200.78px;font-size:9px;color:#111;">12</div>
<div class="t" style="left:833.50px;top:222.68px;font-size:9px;color:#111;">8</div>
<div class="t" style="left:833.50px;top:244.58px;font-size:9px;color:#111;">4</div>
<div class="t" style="left:626.30px;top:271.58px;font-size:9px;color:#111;">0</div>
<div class="t" style="left:660.11px;top:271.58px;font-size:9px;color:#111;">3</div>
<div class="t" style="left:693.92px;top:271.58px;font-size:9px;color:#111;">6</div>
<div class="t" style="left:727.73px;top:271.58px;font-size:9px;color:#111;">9</div>
<div class="t" style="left:759.04px;top:271.58px;font-size:9px;color:#111;">12</div>
<div class="t" style="left:792.85px;top:271.58px;font-size:9px;color:#111;">15</div>
<div class="t" style="left:824.41px;top:271.58px;font-size:9px;color:#111;">min</div>
<div class="t" style="left:619.20px;top:129.38px;font-size:9px;color:#ff18e8;transform-origin:0 0;transform:scaleX(0.9311);">bpm</div>
<div class="t" style="left:637.50px;top:129.38px;font-size:9px;color:#f41818;transform-origin:0 0;transform:scaleX(0.9435);">mmHg</div>
<div class="t" style="left:664.50px;top:129.38px;font-size:9px;color:#157a15;transform-origin:0 0;transform:scaleX(1.0183);">Watt</div>
<div class="t" style="left:715.50px;top:129.38px;font-size:9px;color:#111;">Ergometer()</div>
<div class="t" style="left:824.00px;top:129.38px;font-size:9px;color:#f41818;">MET</div>
<div class="a" style="left:606px;top:293px;width:267.5px;height:194.5px;background:#fff"></div>
<div class="a" style="left:606px;top:293px;width:267.5px;height:19px;background:linear-gradient(#fbfcfe,#eceff5)"></div>
<svg class="a" style="left:608px;top:296px" width="3" height="14"><g fill="#9aa0aa"><rect x="1" y="1" width="1" height="1"/><rect x="1" y="4" width="1" height="1"/><rect x="1" y="7" width="1" height="1"/><rect x="1" y="10" width="1" height="1"/></g></svg>
<svg class="a" style="left:618px;top:298px" width="6" height="9"><path d="M5 1V8L1 4.5Z" fill="#9a9a9a"/></svg>
<div class="t" style="left:635.00px;top:298.14px;font-size:10px;color:#a0a0a0;font-style:italic;">X</div>
<div class="t" style="left:652.00px;top:296.54px;font-size:10px;color:#a0a0a0;font-style:italic;">X</div>
<div class="t" style="left:658.00px;top:302.23px;font-size:8px;color:#a0a0a0;font-style:italic;">X</div>
<svg class="a" style="left:673px;top:298px" width="6" height="9"><path d="M1 1V8L5 4.5Z" fill="#9a9a9a"/></svg>
<div class="t" style="left:607.20px;top:314.73px;font-size:9.3px;color:#111;font-weight:bold;transform-origin:0 0;transform:scaleX(0.9169);">Marked Samples</div>
<div class="t" style="left:607.20px;top:338.93px;font-size:9.3px;color:#111;font-weight:bold;transform-origin:0 0;transform:scaleX(0.9126);">V beats = 49</div>
<div class="t" style="left:780.00px;top:338.93px;font-size:9.3px;color:#111;font-weight:bold;transform-origin:0 0;transform:scaleX(0.9051);">V ectopic rate = 3,04 %</div>
<div class="t" style="left:607.20px;top:406.53px;font-size:9.3px;color:#111;font-weight:bold;transform-origin:0 0;transform:scaleX(0.9046);">SV beats = 0</div>
<div class="t" style="left:775.50px;top:406.53px;font-size:9.3px;color:#111;font-weight:bold;transform-origin:0 0;transform:scaleX(0.8947);">SV ectopic rate = 0,00 %</div>
<svg class="a" style="left:606px;top:312px" width="268" height="176" viewBox="606 312 268 176"><path d="M640.07 323.8V336.2" stroke="#ffb8c4" stroke-width="0.9"/><path d="M651.34 323.8V336.2" stroke="#ffb8c4" stroke-width="0.9"/><path d="M662.61 323.8V336.2" stroke="#ffb8c4" stroke-width="0.9"/><path d="M673.88 323.8V336.2" stroke="#ffb8c4" stroke-width="0.9"/><path d="M685.15 323.8V336.2" stroke="#ffb8c4" stroke-width="0.9"/><path d="M696.42 323.8V336.2" stroke="#ffb8c4" stroke-width="0.9"/><path d="M707.69 323.8V336.2" stroke="#ffb8c4" stroke-width="0.9"/><path d="M718.96 323.8V336.2" stroke="#ffb8c4" stroke-width="0.9"/><path d="M730.23 323.8V336.2" stroke="#ffb8c4" stroke-width="0.9"/><path d="M741.50 323.8V336.2" stroke="#ffb8c4" stroke-width="0.9"/><path d="M752.77 323.8V336.2" stroke="#ffb8c4" stroke-width="0.9"/><path d="M764.04 323.8V336.2" stroke="#ffb8c4" stroke-width="0.9"/><path d="M775.31 323.8V336.2" stroke="#ffb8c4" stroke-width="0.9"/><path d="M786.58 323.8V336.2" stroke="#ffb8c4" stroke-width="0.9"/><path d="M797.85 323.8V336.2" stroke="#ffb8c4" stroke-width="0.9"/><path d="M809.12 323.8V336.2" stroke="#ffb8c4" stroke-width="0.9"/><path d="M820.39 323.8V336.2" stroke="#ffb8c4" stroke-width="0.9"/><path d="M662.61 323.8V336.2" stroke="#5050f0" stroke-width="1.1"/><path d="M640.07 348.4V404.2" stroke="#ffb8c4" stroke-width="0.9"/><path d="M651.34 348.4V404.2" stroke="#ffb8c4" stroke-width="0.9"/><path d="M662.61 348.4V404.2" stroke="#ffb8c4" stroke-width="0.9"/><path d="M673.88 348.4V404.2" stroke="#ffb8c4" stroke-width="0.9"/><path d="M685.15 348.4V404.2" stroke="#ffb8c4" stroke-width="0.9"/><path d="M696.42 348.4V404.2" stroke="#ffb8c4" stroke-width="0.9"/><path d="M707.69 348.4V404.2" stroke="#ffb8c4" stroke-width="0.9"/><path d="M718.96 348.4V404.2" stroke="#ffb8c4" stroke-width="0.9"/><path d="M730.23 348.4V404.2" stroke="#ffb8c4" stroke-width="0.9"/><path d="M741.50 348.4V404.2" stroke="#ffb8c4" stroke-width="0.9"/><path d="M752.77 348.4V404.2" stroke="#ffb8c4" stroke-width="0.9"/><path d="M764.04 348.4V404.2" stroke="#ffb8c4" stroke-width="0.9"/><path d="M775.31 348.4V404.2" stroke="#ffb8c4" stroke-width="0.9"/><path d="M786.58 348.4V404.2" stroke="#ffb8c4" stroke-width="0.9"/><path d="M797.85 348.4V404.2" stroke="#ffb8c4" stroke-width="0.9"/><path d="M809.12 348.4V404.2" stroke="#ffb8c4" stroke-width="0.9"/><path d="M820.39 348.4V404.2" stroke="#ffb8c4" stroke-width="0.9"/><path d="M662.61 348.4V404.2" stroke="#5050f0" stroke-width="1.1"/><path d="M640.07 416.4V472.6" stroke="#ffb8c4" stroke-width="0.9"/><path d="M651.34 416.4V472.6" stroke="#ffb8c4" stroke-width="0.9"/><path d="M662.61 416.4V472.6" stroke="#ffb8c4" stroke-width="0.9"/><path d="M673.88 416.4V472.6" stroke="#ffb8c4" stroke-width="0.9"/><path d="M685.15 416.4V472.6" stroke="#ffb8c4" stroke-width="0.9"/><path d="M696.42 416.4V472.6" stroke="#ffb8c4" stroke-width="0.9"/><path d="M707.69 416.4V472.6" stroke="#ffb8c4" stroke-width="0.9"/><path d="M718.96 416.4V472.6" stroke="#ffb8c4" stroke-width="0.9"/><path d="M730.23 416.4V472.6" stroke="#ffb8c4" stroke-width="0.9"/><path d="M741.50 416.4V472.6" stroke="#ffb8c4" stroke-width="0.9"/><path d="M752.77 416.4V472.6" stroke="#ffb8c4" stroke-width="0.9"/><path d="M764.04 416.4V472.6" stroke="#ffb8c4" stroke-width="0.9"/><path d="M775.31 416.4V472.6" stroke="#ffb8c4" stroke-width="0.9"/><path d="M786.58 416.4V472.6" stroke="#ffb8c4" stroke-width="0.9"/><path d="M797.85 416.4V472.6" stroke="#ffb8c4" stroke-width="0.9"/><path d="M809.12 416.4V472.6" stroke="#ffb8c4" stroke-width="0.9"/><path d="M820.39 416.4V472.6" stroke="#ffb8c4" stroke-width="0.9"/><path d="M662.61 416.4V472.6" stroke="#5050f0" stroke-width="1.1"/><path d="M629.2 349.4V361.4" stroke="#f40000" stroke-width="1.15"/><path d="M630.4 349.4V361.4" stroke="#f40000" stroke-width="1.15"/><path d="M632.1 349.4V361.4" stroke="#f40000" stroke-width="1.15"/><path d="M633.9 349.4V361.4" stroke="#f40000" stroke-width="1.15"/><path d="M635.3 349.4V361.4" stroke="#f40000" stroke-width="1.15"/><path d="M637.1 349.4V361.4" stroke="#f40000" stroke-width="1.15"/><path d="M638.5 349.4V361.4" stroke="#f40000" stroke-width="1.15"/><path d="M640.0 349.4V361.4" stroke="#f40000" stroke-width="1.15"/><path d="M641.5 349.4V361.4" stroke="#f40000" stroke-width="1.15"/><path d="M646.1 349.4V361.4" stroke="#f40000" stroke-width="1.15"/><path d="M648.2 349.4V361.4" stroke="#f40000" stroke-width="1.15"/><path d="M650.2 349.4V361.4" stroke="#f40000" stroke-width="1.15"/><path d="M652.3 349.4V361.4" stroke="#f40000" stroke-width="1.15"/><path d="M654.3 349.4V361.4" stroke="#f40000" stroke-width="1.15"/><path d="M656.4 349.4V361.4" stroke="#f40000" stroke-width="1.15"/><path d="M658.1 349.4V361.4" stroke="#f40000" stroke-width="1.15"/><path d="M659.9 349.4V361.4" stroke="#f40000" stroke-width="1.15"/><path d="M661.0 349.4V361.4" stroke="#f40000" stroke-width="1.15"/><path d="M664.8 349.4V361.4" stroke="#f40000" stroke-width="0.9"/><path d="M667.7 349.4V361.4" stroke="#f40000" stroke-width="0.9"/><path d="M670.9 349.4V361.4" stroke="#f40000" stroke-width="0.9"/><path d="M673.6 349.4V361.4" stroke="#f40000" stroke-width="0.9"/><path d="M676.8 349.4V361.4" stroke="#f40000" stroke-width="0.9"/><path d="M687.6 349.4V361.4" stroke="#f40000" stroke-width="0.9"/><path d="M702.5 349.4V361.4" stroke="#f40000" stroke-width="0.9"/><path d="M766.7 349.4V361.4" stroke="#f40000" stroke-width="0.9"/><path d="M798.2 349.4V361.4" stroke="#f40000" stroke-width="0.9"/><path d="M816.6 349.4V361.4" stroke="#f40000" stroke-width="0.9"/><path d="M819.6 349.4V361.4" stroke="#f40000" stroke-width="0.9"/><path d="M822.5 349.4V361.4" stroke="#f40000" stroke-width="0.9"/><path d="M824.8 349.4V361.4" stroke="#f40000" stroke-width="0.9"/><path d="M827.2 349.4V361.4" stroke="#f40000" stroke-width="0.9"/><rect x="628.5" y="349.2" width="14" height="12.2" fill="#f40000" opacity=".28"/><rect x="646" y="349.2" width="16" height="12.2" fill="#f40000" opacity=".2"/><rect x="627.8" y="323.8" width="203.0" height="12.4" fill="none" stroke="#111" stroke-width="1.1"/><rect x="627.8" y="348.4" width="203.0" height="13.800000000000011" fill="none" stroke="#111" stroke-width="1.1"/><rect x="627.8" y="362.2" width="203.0" height="14.0" fill="none" stroke="#111" stroke-width="1.1"/><rect x="627.8" y="376.2" width="203.0" height="14.0" fill="none" stroke="#111" stroke-width="1.1"/><rect x="627.8" y="390.2" width="203.0" height="14.0" fill="none" stroke="#111" stroke-width="1.1"/><rect x="627.8" y="416.4" width="203.0" height="14.0" fill="none" stroke="#111" stroke-width="1.1"/><rect x="627.8" y="430.4" width="203.0" height="14.0" fill="none" stroke="#111" stroke-width="1.1"/><rect x="627.8" y="444.4" width="203.0" height="14.0" fill="none" stroke="#111" stroke-width="1.1"/><rect x="627.8" y="458.4" width="203.0" height="14.200000000000045" fill="none" stroke="#111" stroke-width="1.1"/><path d="M625.3 355H627.8" stroke="#111" stroke-width="1"/><path d="M625.3 369H627.8" stroke="#111" stroke-width="1"/><path d="M625.3 383H627.8" stroke="#111" stroke-width="1"/><path d="M625.3 397H627.8" stroke="#111" stroke-width="1"/><path d="M625.3 423H627.8" stroke="#111" stroke-width="1"/><path d="M625.3 437H627.8" stroke="#111" stroke-width="1"/><path d="M625.3 451H627.8" stroke="#111" stroke-width="1"/><path d="M625.3 465H627.8" stroke="#111" stroke-width="1"/></svg>
<div class="t" style="left:833.50px;top:325.58px;font-size:9px;color:#111;">0</div>
<div class="t" style="left:833.50px;top:350.58px;font-size:9px;color:#111;">49</div>
<div class="t" style="left:833.50px;top:364.78px;font-size:9px;color:#111;">0</div>
<div class="t" style="left:833.50px;top:378.78px;font-size:9px;color:#111;">0</div>
<div class="t" style="left:833.50px;top:392.78px;font-size:9px;color:#111;">0</div>
<div class="t" style="left:833.50px;top:418.98px;font-size:9px;color:#111;">0</div>
<div class="t" style="left:833.50px;top:432.98px;font-size:9px;color:#111;">0</div>
<div class="t" style="left:833.50px;top:446.98px;font-size:9px;color:#111;">0</div>
<div class="t" style="left:833.50px;top:461.08px;font-size:9px;color:#111;">0</div>
<div class="t" style="left:619.26px;top:352.39px;font-size:5.8px;color:#222;">VE</div>
<div class="t" style="left:611.85px;top:366.59px;font-size:5.8px;color:#222;">VCPL</div>
<div class="t" style="left:610.57px;top:380.59px;font-size:5.8px;color:#222;">VRUN</div>
<div class="t" style="left:611.21px;top:394.59px;font-size:5.8px;color:#222;">VTCH</div>
<div class="t" style="left:615.39px;top:420.79px;font-size:5.8px;color:#222;">SVE</div>
<div class="t" style="left:607.98px;top:434.79px;font-size:5.8px;color:#222;">SVCPL</div>
<div class="t" style="left:606.70px;top:448.79px;font-size:5.8px;color:#222;">SVRUN</div>
<div class="t" style="left:607.34px;top:462.89px;font-size:5.8px;color:#222;">SVTCH</div>
<div class="t" style="left:625.30px;top:473.58px;font-size:9px;color:#111;">0</div>
<div class="t" style="left:659.11px;top:473.58px;font-size:9px;color:#111;">3</div>
<div class="t" style="left:692.92px;top:473.58px;font-size:9px;color:#111;">6</div>
<div class="t" style="left:726.73px;top:473.58px;font-size:9px;color:#111;">9</div>
<div class="t" style="left:758.04px;top:473.58px;font-size:9px;color:#111;">12</div>
<div class="t" style="left:791.85px;top:473.58px;font-size:9px;color:#111;">15</div>
<div class="t" style="left:823.41px;top:473.58px;font-size:9px;color:#111;">min</div>
<div class="a" style="left:606px;top:489px;width:267.5px;height:195.2px;background:#fff"></div>
<div class="a" style="left:606px;top:489px;width:267.5px;height:19.5px;background:linear-gradient(#fbfcfe,#eceff5)"></div>
<svg class="a" style="left:608px;top:492px" width="3" height="14"><g fill="#9aa0aa"><rect x="1" y="1" width="1" height="1"/><rect x="1" y="4" width="1" height="1"/><rect x="1" y="7" width="1" height="1"/><rect x="1" y="10" width="1" height="1"/></g></svg>
<svg class="a" style="left:615px;top:492px" width="13" height="14"><rect x="0.5" y="0.5" width="12" height="13" rx="2.5" fill="#e2e2e2" stroke="#a4a4a4"/><path d="M9 2.5V11.5L3 7Z" fill="#9a9a9a"/></svg>
<div class="t" style="left:638.17px;top:494.29px;font-size:11px;color:#111;font-family:'Liberation Serif',serif;">I</div>
<svg class="a" style="left:650px;top:497.5px" width="6" height="4"><path d="M0.5 0.5H5.5L3 3.5Z" fill="#000"/></svg>
<svg class="a" style="left:660px;top:492px" width="14" height="14"><rect x="0.7" y="0.7" width="12.6" height="12.6" rx="3" fill="#fff" stroke="#111" stroke-width="1.3"/><path d="M4 2.5V11.5L10.5 7Z" fill="#000"/></svg>
<div class="a" style="left:678px;top:493px;width:1px;height:12px;background:#a0a0a0"></div>
<div class="t" style="left:684.00px;top:495.16px;font-size:9.5px;color:#111;transform-origin:0 0;transform:scaleX(0.9277);">J+ 60 ms</div>
<svg class="a" style="left:724px;top:497.5px" width="6" height="4"><path d="M0.5 0.5H5.5L3 3.5Z" fill="#000"/></svg>
<svg class="a" style="left:606px;top:509px" width="268" height="176" viewBox="606 509 268 176"><path d="M627.3 651.10H830.5" stroke="#ffc0c8" stroke-width="1"/><path d="M627.3 640.16H830.5" stroke="#ffc0c8" stroke-width="1"/><path d="M627.3 629.22H830.5" stroke="#ffc0c8" stroke-width="1"/><path d="M627.3 618.28H830.5" stroke="#ffc0c8" stroke-width="1"/><path d="M627.3 607.34H830.5" stroke="#ffc0c8" stroke-width="1"/><path d="M627.3 596.40H830.5" stroke="#ffc0c8" stroke-width="1"/><path d="M627.3 585.46H830.5" stroke="#ffc0c8" stroke-width="1"/><path d="M627.3 574.52H830.5" stroke="#ffc0c8" stroke-width="1"/><path d="M627.3 563.58H830.5" stroke="#ffc0c8" stroke-width="1"/><path d="M627.3 552.64H830.5" stroke="#ffc0c8" stroke-width="1"/><path d="M627.3 541.70H830.5" stroke="#ffc0c8" stroke-width="1"/><path d="M647.62 530.5V662" stroke="#ffc0c8" stroke-width="1"/><path d="M667.94 530.5V662" stroke="#ffc0c8" stroke-width="1"/><path d="M688.26 530.5V662" stroke="#ffc0c8" stroke-width="1"/><path d="M708.58 530.5V662" stroke="#ffc0c8" stroke-width="1"/><path d="M749.22 530.5V662" stroke="#ffc0c8" stroke-width="1"/><path d="M769.54 530.5V662" stroke="#ffc0c8" stroke-width="1"/><path d="M789.86 530.5V662" stroke="#ffc0c8" stroke-width="1"/><path d="M810.18 530.5V662" stroke="#ffc0c8" stroke-width="1"/><path d="M728.90 530.5V662M830.5 530.5V662" stroke="#e82020" stroke-width="1.1"/><path d="M627.3 530.5V662H830.5" fill="none" stroke="#2020f0" stroke-width="1.2"/><polyline points="662.5,597.2 663.5,596.6 664.5,597.2 665.5,597.2 666.5,597.2 667.5,597.2 668.5,597.2 669.5,597.2 670.5,597.2 671.5,597.2 672.5,597.2 673.5,597.2 674.5,597.2 675.5,597.2 676.5,597.2 677.5,597.2 678.5,597.2 679.5,597.2 680.5,597.2 681.5,596.6 682.5,597.2 683.5,596.6 684.5,597.2 685.5,597.2 686.5,597.2 687.5,597.2 688.5,597.2 689.5,597.2 690.5,597.2 691.5,597.2 692.5,597.2 693.5,597.2 694.5,597.2 695.5,597.2 696.5,597.2 697.5,597.2" fill="none" stroke="#f41010" stroke-width="1.8"/><polyline points="740.0,597.2 741.0,597.2 742.0,597.2 743.0,597.2" fill="none" stroke="#f41010" stroke-width="1.8"/><polyline points="697.0,598.6 698.0,598.0 699.0,598.0 700.0,598.0 701.0,598.0 702.0,598.0 703.0,598.0 704.0,598.0 705.0,598.0 706.0,598.6 707.0,598.0 708.0,597.4 709.0,598.0 710.0,598.0 711.0,598.0 712.0,597.4 713.0,598.0 714.0,597.4 715.0,598.6 716.0,598.6 717.0,598.0 718.0,598.0 719.0,598.0 720.0,598.0 721.0,598.0 722.0,598.0 723.0,598.0 724.0,597.4 725.0,598.6 726.0,598.0 727.0,598.0 728.0,598.0 729.0,598.0 730.0,598.0 731.0,598.0 732.0,598.0 733.0,598.0 734.0,597.4 735.0,598.0 736.0,598.0 737.0,598.0 738.0,597.4 739.0,598.0 740.0,598.0" fill="none" stroke="#128a12" stroke-width="1.8"/><polyline points="748.0,597.0 749.0,597.0 750.0,597.0 751.0,597.0 752.0,597.6 753.0,597.0 754.0,597.0 755.0,596.4 756.0,597.0 757.0,597.0 758.0,597.0 759.0,597.0 760.0,597.0 761.0,597.0 762.0,597.0 763.0,597.0 764.0,597.0 765.0,597.0 766.0,597.0 767.0,597.0 768.0,597.0 769.0,597.0 770.0,597.0 771.0,597.6 772.0,597.0 773.0,597.0 774.0,597.0 775.0,597.0" fill="none" stroke="#128a12" stroke-width="1.8"/></svg>
<div class="t" style="left:611.18px;top:647.02px;font-size:8.6px;color:#111;">-5,0</div>
<div class="t" style="left:611.18px;top:636.08px;font-size:8.6px;color:#111;">-4,0</div>
<div class="t" style="left:611.18px;top:625.14px;font-size:8.6px;color:#111;">-3,0</div>
<div class="t" style="left:611.18px;top:614.20px;font-size:8.6px;color:#111;">-2,0</div>
<div class="t" style="left:611.18px;top:603.26px;font-size:8.6px;color:#111;">-1,0</div>
<div class="t" style="left:609.02px;top:592.32px;font-size:8.6px;color:#111;">+0,0</div>
<div class="t" style="left:609.02px;top:581.38px;font-size:8.6px;color:#111;">+1,0</div>
<div class="t" style="left:609.02px;top:570.44px;font-size:8.6px;color:#111;">+2,0</div>
<div class="t" style="left:609.02px;top:559.50px;font-size:8.6px;color:#111;">+3,0</div>
<div class="t" style="left:609.02px;top:548.56px;font-size:8.6px;color:#111;">+4,0</div>
<div class="t" style="left:609.02px;top:537.62px;font-size:8.6px;color:#111;">+5,0</div>
<div class="t" style="left:622.30px;top:663.88px;font-size:9px;color:#111;">50</div>
<div class="t" style="left:721.79px;top:663.88px;font-size:9px;color:#111;">100</div>
<div class="t" style="left:822.99px;top:663.88px;font-size:9px;color:#111;">150</div>
<div class="t" style="left:843.50px;top:663.88px;font-size:9px;color:#111;">HR</div>
<div class="t" style="left:618.00px;top:520.88px;font-size:9px;color:#111;transform-origin:0 0;transform:scaleX(0.9761);">ST level (mm)</div>
<div class="t" style="left:793.50px;top:520.88px;font-size:9px;color:#f41818;">Test</div>
<div class="t" style="left:812.50px;top:520.88px;font-size:9px;color:#157a15;transform-origin:0 0;transform:scaleX(0.9866);">Recovery</div>
<div class="a" style="left:876px;top:97px;width:124px;height:589.3px;background:#000080"></div>
<div class="a" style="left:876px;top:96.7px;width:124px;height:1.2px;background:#c8d0ec"></div>
<div class="t" style="left:879.70px;top:101.26px;font-size:8.2px;color:#fff;transform-origin:0 0;transform:scaleX(0.9319);">Time[min:s]</div>
<div class="t" style="left:909.52px;top:108.13px;font-size:29.5px;color:#fff;transform-origin:0 0;transform:scaleX(0.9747);">3:00</div>
<div class="a" style="left:876px;top:142.1px;width:124px;height:1.2px;background:#8a9ad0"></div>
<div class="t" style="left:879.70px;top:146.66px;font-size:8.2px;color:#fff;transform-origin:0 0;transform:scaleX(0.9638);">Phase time [min:s]</div>
<div class="t" style="left:909.52px;top:153.53px;font-size:29.5px;color:#fff;transform-origin:0 0;transform:scaleX(0.9747);">2:00</div>
<div class="a" style="left:876px;top:187.5px;width:124px;height:1.2px;background:#8a9ad0"></div>
<div class="t" style="left:879.70px;top:192.06px;font-size:8.2px;color:#fff;transform-origin:0 0;transform:scaleX(0.9817);">Auto BP [mmHg]</div>
<div class="t" style="left:896.22px;top:198.93px;font-size:29.5px;color:#ff1010;transform-origin:0 0;transform:scaleX(0.9373);">132/63</div>
<div class="a" style="left:876px;top:232.9px;width:124px;height:1.2px;background:#8a9ad0"></div>
<div class="t" style="left:879.70px;top:237.46px;font-size:8.2px;color:#fff;transform-origin:0 0;transform:scaleX(0.9757);">Heart rate [bpm]</div>
<div class="t" style="left:924.02px;top:244.33px;font-size:29.5px;color:#20ee20;transform-origin:0 0;transform:scaleX(0.8857);">74</div>
<div class="a" style="left:876px;top:278.3px;width:124px;height:1.2px;background:#8a9ad0"></div>
<div class="t" style="left:879.70px;top:282.86px;font-size:8.2px;color:#fff;transform-origin:0 0;transform:scaleX(0.9395);">SpO2</div>
<div class="t" style="left:911.62px;top:289.73px;font-size:29.5px;color:#f4f020;transform-origin:0 0;transform:scaleX(0.9387);">-- %</div>
<div class="a" style="left:876px;top:323.7px;width:124px;height:1.2px;background:#8a9ad0"></div>
<div class="t" style="left:879.70px;top:328.26px;font-size:8.2px;color:#fff;transform-origin:0 0;transform:scaleX(0.9738);">MET (3,4 / 6,7)</div>
<div class="t" style="left:908.92px;top:335.13px;font-size:29.5px;color:#fff;transform-origin:0 0;transform:scaleX(0.9461);">52%</div>
<div class="a" style="left:876px;top:369.1px;width:124px;height:1.2px;background:#8a9ad0"></div>
<div class="t" style="left:879.70px;top:373.66px;font-size:8.2px;color:#fff;transform-origin:0 0;transform:scaleX(0.9477);">MET max</div>
<div class="t" style="left:895.44px;top:394.53px;font-size:16.5px;color:#fff;transform-origin:0 0;transform:scaleX(1.0386);">8,2 (123%)</div>
<div class="a" style="left:876px;top:414.5px;width:124px;height:1.2px;background:#8a9ad0"></div>
<div class="t" style="left:879.70px;top:419.06px;font-size:8.2px;color:#fff;transform-origin:0 0;transform:scaleX(0.9874);">Load [Watt]</div>
<div class="t" style="left:921.62px;top:425.93px;font-size:29.5px;color:#fff;transform-origin:0 0;transform:scaleX(0.9589);">50</div>
<div class="a" style="left:876px;top:459.9px;width:124px;height:1.2px;background:#8a9ad0"></div>
<div class="t" style="left:879.70px;top:464.46px;font-size:8.2px;color:#fff;transform-origin:0 0;transform:scaleX(0.8712);">BMI</div>
<div class="t" style="left:901.62px;top:471.33px;font-size:29.5px;color:#fff;transform-origin:0 0;transform:scaleX(0.9600);">24,39</div>
<div class="a" style="left:876px;top:505.3px;width:124px;height:1.2px;background:#8a9ad0"></div>
<div class="t" style="left:879.70px;top:509.86px;font-size:8.2px;color:#fff;transform-origin:0 0;transform:scaleX(0.8691);">DP</div>
<div class="t" style="left:899.62px;top:516.73px;font-size:29.5px;color:#fff;transform-origin:0 0;transform:scaleX(0.9370);">10362</div>
<div class="a" style="left:876px;top:550.7px;width:124px;height:1.2px;background:#8a9ad0"></div>
<div class="t" style="left:879.70px;top:555.26px;font-size:8.2px;color:#fff;">V ectopic rate (49/1611)</div>
<div class="t" style="left:905.92px;top:562.13px;font-size:29.5px;color:#fff;transform-origin:0 0;transform:scaleX(0.9453);">3,0%</div>
<div class="a" style="left:876px;top:596.1px;width:124px;height:1.2px;background:#8a9ad0"></div>
<div class="t" style="left:879.70px;top:600.66px;font-size:8.2px;color:#fff;">SV ectopic rate (0/1611)</div>
<div class="t" style="left:905.92px;top:607.53px;font-size:29.5px;color:#fff;transform-origin:0 0;transform:scaleX(0.9453);">0,0%</div>
<div class="a" style="left:876px;top:641.5px;width:124px;height:1.2px;background:#8a9ad0"></div>
<div class="t" style="left:879.70px;top:646.06px;font-size:8.2px;color:#fff;transform-origin:0 0;transform:scaleX(0.9908);">Target HR: 147 bpm</div>
<div class="t" style="left:909.12px;top:652.93px;font-size:29.5px;color:#fff;transform-origin:0 0;transform:scaleX(0.9580);">50%</div>
<div class="t" style="left:971.30px;top:192.85px;font-size:7.5px;color:#e02020;transform-origin:0 0;transform:scaleX(1.0282);">sys/dia</div>
<div class="a" style="left:604px;top:686.3px;width:396px;height:32.7px;background:#e8e8e8"></div><div class="a" style="left:604px;top:717.6px;width:396px;height:1.4px;background:#8e8e8e"></div><div class="a" style="left:947px;top:688px;width:1px;height:29px;background:#f8f8f8"></div>
<div class="a" style="left:604px;top:684.2px;width:272px;height:2.1px;background:#4682b4"></div>
<div class="a" style="left:606.5px;top:689.5px;width:21px;height:26.5px;background:linear-gradient(#86c8c8,#6cb4b4);border:1px solid #355;border-radius:3px"></div>
<svg class="a" style="left:611px;top:699px" width="13" height="8"><path d="M0.5 7.5H12.5L6.5 0.5Z" fill="#000"/></svg>
<div class="a" style="left:630.5px;top:689.5px;width:21px;height:26.5px;background:linear-gradient(#cc7272,#b85c5c);border:1px solid #633;border-radius:3px"></div>
<svg class="a" style="left:634px;top:697px" width="15" height="11" viewBox="0 0 15 11"><path d="M1 3H10L13 5.5V8.5H1Z" fill="#fff" stroke="#222" stroke-width=".7"/><path d="M3.8 3.8V7.4M2 5.6H5.6" stroke="#e01010" stroke-width="1.3"/><circle cx="4" cy="9" r="1.2" fill="#111"/><circle cx="11" cy="9" r="1.2" fill="#111"/><path d="M9 1L11 3" stroke="#f0a020" stroke-width="1.3"/></svg>
<div class="t" style="left:729.50px;top:693.53px;font-size:9.3px;color:#111;font-weight:bold;transform-origin:0 0;transform:scaleX(0.9900);">Manual load by</div>
<div class="t" style="left:742.50px;top:704.33px;font-size:9.3px;color:#111;font-weight:bold;transform-origin:0 0;transform:scaleX(0.9922);">load step</div>
<div class="a" style="left:875.6px;top:689.5px;width:21.600000000000023px;height:26.5px;background:linear-gradient(#8e8e8e,#767676);border:1px solid #222;border-radius:3px"></div>
<div class="a" style="left:881.9000000000001px;top:701.5px;width:9px;height:3px;background:#000"></div>
<div class="a" style="left:899px;top:689.5px;width:21.600000000000023px;height:26.5px;background:linear-gradient(#8e8e8e,#767676);border:1px solid #222;border-radius:3px"></div>
<div class="a" style="left:906.3px;top:699px;width:2.6px;height:8px;background:#000"></div><div class="a" style="left:910.8px;top:699px;width:2.6px;height:8px;background:#000"></div>
<div class="a" style="left:922.4px;top:689.5px;width:22.0px;height:26.5px;background:linear-gradient(#8e8e8e,#767676);border:1px solid #222;border-radius:3px"></div>
<div class="a" style="left:928.9px;top:701.5px;width:9px;height:3px;background:#000"></div><div class="a" style="left:931.9px;top:698.5px;width:3px;height:9px;background:#000"></div>
<div class="a" style="left:959.5px;top:689.5px;width:36.5px;height:26.5px;background:linear-gradient(#d89a9a,#cc8484);border:1px solid #b06a6a;border-radius:3px"></div>
<div class="t" style="left:971.40px;top:692.46px;font-size:9.5px;color:#f0d0d0;font-weight:bold;">BP</div>
<div class="t" style="left:967.71px;top:703.46px;font-size:9.5px;color:#f0d0d0;font-weight:bold;">start</div>
</body></html>
